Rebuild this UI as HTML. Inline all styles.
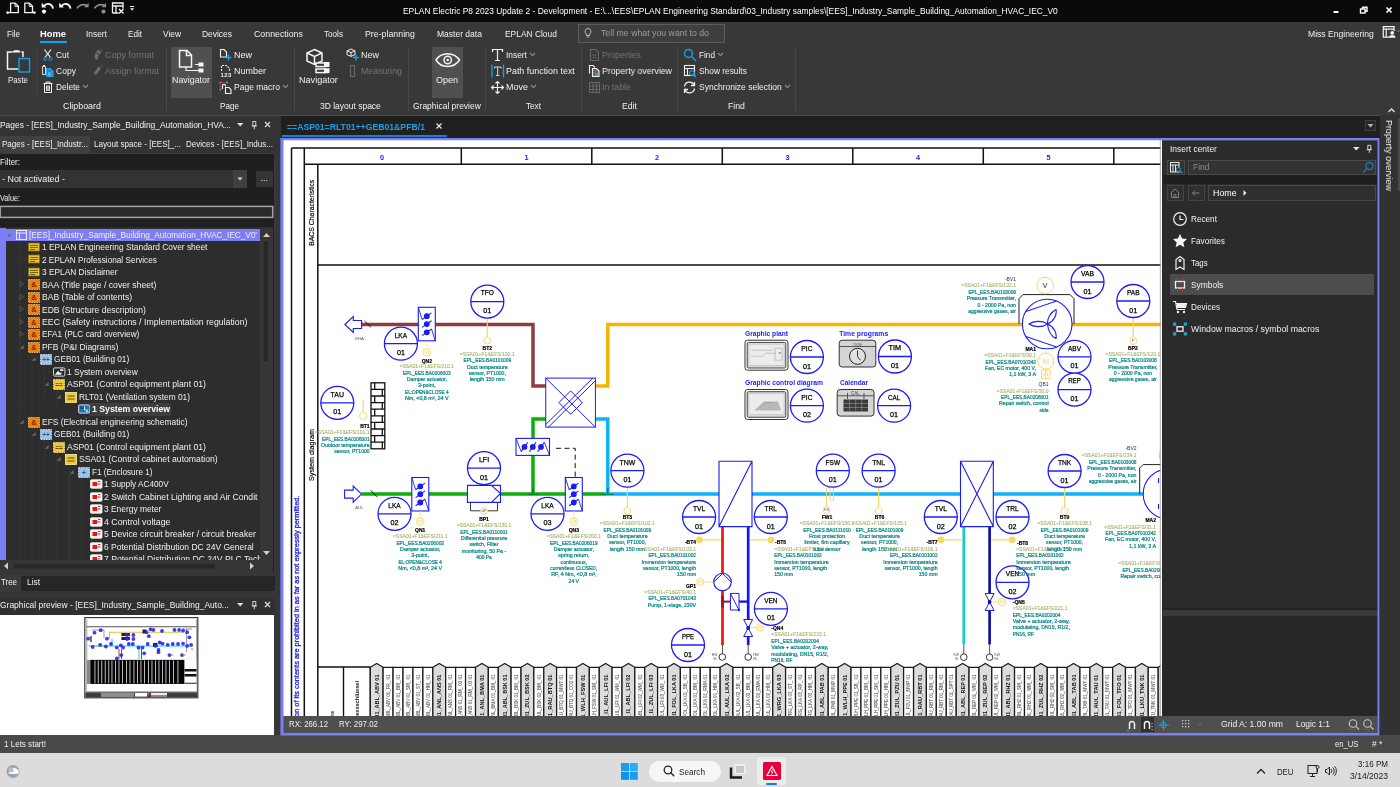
<!DOCTYPE html>
<html lang="en"><head><meta charset="utf-8"><title>EPLAN Electric P8</title><style>html,body{margin:0;padding:0}body{width:1400px;height:787px;position:relative;overflow:hidden;background:#2b2b2b;font-family:"Liberation Sans",sans-serif}
.b{position:absolute;display:block}
svg.b{will-change:transform}
#app{position:absolute;left:0;top:0;width:1400px;height:787px;will-change:transform}
.t{position:absolute;white-space:nowrap;line-height:1;transform-origin:0 0;display:block}
svg text{font-family:"Liberation Sans",sans-serif}</style></head><body>
<div id="app">
<div class="b" style="left:0px;top:0px;width:1400px;height:22px;background:#0a0a0a;"></div>
<svg class="b" style="left:0px;top:0px;" width="140" height="22" viewBox="0 0 140 22">
<g fill="none" stroke="#f4f4f4" stroke-width="1.300" stroke-linejoin="round">
<path d="M10.600 12.500V3.200h4.600l3.100 3v6.300"/><path d="M15 3.400v3h3.200" stroke-width="1"/><path d="M7.500 12.600H18.900" stroke-width="1.200"/>
<path d="M24.800 12.500V3.200h4.600l3.100 3v6.300"/><path d="M29.200 3.400v3h3.200" stroke-width="1"/><path d="M24.200 12.600H34.500" stroke-width="1.200"/>
<path d="M43.800 6.200C46.500 2.600 52 3.200 53 8.600" stroke-width="1.900"/>
<path d="M61.300 6.200C64 2.600 69.500 3.200 70.500 8.600" stroke-width="1.900"/>
</g>
<g fill="#f4f4f4"><circle cx="7.600" cy="12.600" r="1.300"/><circle cx="34.400" cy="12.600" r="1.300"/>
<path d="M41.700 2.800v4.700h4.700z"/><circle cx="44" cy="11.600" r="2.100"/><path d="M59.200 2.800v4.700h4.700z"/></g>
<g fill="none" stroke="#8c8c8c" stroke-width="1.800"><path d="M77 8.300C79 4.500 84 3.600 87.200 5.800"/><path d="M94.500 8.300C96.500 4.500 101.500 3.600 104.700 5.800"/></g>
<g fill="#8c8c8c"><path d="M88.600 2.800v4.500h-4.500z"/><path d="M106.100 2.800v4.500h-4.500z"/><circle cx="103.500" cy="11.600" r="2.100"/></g>
<g fill="none" stroke="#f4f4f4" stroke-width="1.300"><path d="M112.500 13V3h10.500v5.500M112.500 6h10.500M116 6v7M112.500 13h6"/><path d="M119 9l4.500 4.500M123.500 9L119 13.500" stroke-width="1.400"/></g>
<path d="M130 6h4.200v1.100H130zM130 8.300h4.200l-2.100 2.200z" fill="#f4f4f4"/>
</svg>
<span class="t" style="left:403px;top:6.93px;font-size:9.3px;color:#ffffff;transform:scaleX(0.9020);">EPLAN Electric P8 2023 Update 2 - Development - E:\...\EES\EPLAN Engineering Standard\03_Industry samples\[EES]_Industry_Sample_Building_Automation_HVAC_IEC_V0</span>
<svg class="b" style="left:1320px;top:0px;" width="80" height="22" viewBox="0 0 80 22">
<g stroke="#fff" fill="none" stroke-width="1.4"><path d="M13.5 12h5" stroke-width="2"/>
<rect x="40.5" y="9" width="4.5" height="4"/><path d="M42.5 9V7.2h4.5v4h-2"/>
<path d="M66.5 7.5l5 5M71.5 7.5l-5 5" stroke-width="1.6"/></g>
</svg>
<div class="b" style="left:0px;top:22px;width:1400px;height:93px;background:#383838;"></div>
<span class="t" style="left:7px;top:29.04px;font-size:9.4px;color:#f0f0f0;transform:scaleX(0.8582);">File</span>
<span class="t" style="left:40px;top:29.04px;font-size:9.4px;color:#ffffff;font-weight:bold;transform:scaleX(0.9955);">Home</span>
<span class="t" style="left:86px;top:29.04px;font-size:9.4px;color:#f0f0f0;transform:scaleX(0.8933);">Insert</span>
<span class="t" style="left:128px;top:29.04px;font-size:9.4px;color:#f0f0f0;transform:scaleX(0.8643);">Edit</span>
<span class="t" style="left:163px;top:29.04px;font-size:9.4px;color:#f0f0f0;transform:scaleX(0.8908);">View</span>
<span class="t" style="left:202px;top:29.04px;font-size:9.4px;color:#f0f0f0;transform:scaleX(0.8973);">Devices</span>
<span class="t" style="left:254px;top:29.04px;font-size:9.4px;color:#f0f0f0;transform:scaleX(0.9377);">Connections</span>
<span class="t" style="left:324px;top:29.04px;font-size:9.4px;color:#f0f0f0;transform:scaleX(0.8658);">Tools</span>
<span class="t" style="left:365px;top:29.04px;font-size:9.4px;color:#f0f0f0;transform:scaleX(0.9380);">Pre-planning</span>
<span class="t" style="left:437px;top:29.04px;font-size:9.4px;color:#f0f0f0;transform:scaleX(0.9066);">Master data</span>
<span class="t" style="left:505px;top:29.04px;font-size:9.4px;color:#f0f0f0;transform:scaleX(0.8966);">EPLAN Cloud</span>
<div class="b" style="left:40px;top:41px;width:27px;height:2px;background:#00a8f0;"></div>
<div class="b" style="left:578px;top:24px;width:147px;height:19px;background:#3e3e3e;border:1px solid #5c5c5c;box-sizing:border-box;"></div>
<svg class="b" style="left:582px;top:26px;" width="12" height="16" viewBox="0 0 12 16">
<g fill="none" stroke="#bdbdbd" stroke-width="1"><path d="M6 2.5a3 3 0 0 1 1.6 5.5v1.5h-3.2V8A3 3 0 0 1 6 2.5zM4.8 11h2.4"/></g>
</svg>
<span class="t" style="left:601px;top:29.13px;font-size:9.3px;color:#9c9c9c;transform:scaleX(0.9411);">Tell me what you want to do</span>
<span class="t" style="left:1308px;top:29.04px;font-size:9.4px;color:#f0f0f0;transform:scaleX(0.9153);">Miss Engineering</span>
<svg class="b" style="left:1380px;top:24px;" width="20" height="18" viewBox="0 0 20 18">
<g fill="none" stroke="#f0f0f0" stroke-width="1.200"><path d="M9 13.200H3.300V2.600h10.800v4.500M3.300 5.200h10.800M6.200 5.200v8"/></g><circle cx="12.200" cy="8.800" r="1.900" fill="#f4f4f4"/><path d="M8.800 13.800c0-3.800 6.800-3.800 6.800 0z" fill="#f4f4f4"/><path d="M16.800 6.300l1.500 1.500 1.500-1.500" fill="none" stroke="#8a8a8a" stroke-width="1"/>
</svg>
<div class="b" style="left:36px;top:47px;width:1px;height:50px;background:#424242;"></div>
<div class="b" style="left:166px;top:47px;width:1px;height:64px;background:#484848;"></div>
<div class="b" style="left:294px;top:47px;width:1px;height:64px;background:#484848;"></div>
<div class="b" style="left:408px;top:47px;width:1px;height:64px;background:#484848;"></div>
<div class="b" style="left:485px;top:47px;width:1px;height:64px;background:#484848;"></div>
<div class="b" style="left:581px;top:47px;width:1px;height:64px;background:#484848;"></div>
<div class="b" style="left:677px;top:47px;width:1px;height:64px;background:#484848;"></div>
<div class="b" style="left:795px;top:47px;width:1px;height:64px;background:#484848;"></div>
<div class="b" style="left:171px;top:47px;width:41px;height:51px;background:#505050;"></div>
<div class="b" style="left:432px;top:47px;width:31px;height:51px;background:#505050;"></div>
<svg class="b" style="left:4px;top:46px;" width="30" height="28" viewBox="0 0 30 28">
<g fill="none" stroke="#f4f4f4" stroke-width="1.5"><path d="M8.5 6H3.5v17h11M17.5 6h1.5v5"/><path d="M8.5 6.5c0-3.2 8-3.2 8 0z" fill="#f4f4f4" stroke="none"/>
<rect x="15" y="12.5" width="10.5" height="13.5" stroke="#0aa5ee" stroke-width="1.4"/></g>
</svg>
<span class="t" style="left:8px;top:75.04px;font-size:9.4px;color:#f0f0f0;transform:scaleX(0.8320);">Paste</span>
<svg class="b" style="left:42px;top:48px;" width="12" height="14" viewBox="0 0 12 14">
<g fill="none" stroke-width="1"><path d="M2.5 1.5l6 8M9 1.5l-6 8" stroke="#f0f0f0" stroke-width="1.2"/><circle cx="3" cy="10.8" r="1.5" stroke="#1ba1e2"/><circle cx="8.5" cy="10.8" r="1.5" stroke="#1ba1e2"/></g>
</svg>
<span class="t" style="left:56px;top:50.34px;font-size:9.4px;color:#f0f0f0;transform:scaleX(0.8887);">Cut</span>
<svg class="b" style="left:41px;top:64px;" width="14" height="14" viewBox="0 0 14 14">
<g><path d="M1.5 2.5h3v8h-3z" fill="none" stroke="#ddd"/><rect x="2" y="1" width="2" height="2" fill="#ddd"/><path d="M5.5 4.5h4l2.5 2.5v5.5h-6.5z" fill="#1a8fd0" stroke="#2aa9ee" stroke-width="1"/><path d="M7 9h3M7 10.8h3" stroke="#bfe4fa" stroke-width=".7"/></g>
</svg>
<span class="t" style="left:56px;top:66.34px;font-size:9.4px;color:#f0f0f0;transform:scaleX(0.9114);">Copy</span>
<svg class="b" style="left:42px;top:80px;" width="12" height="14" viewBox="0 0 12 14">
<g fill="none" stroke="#f0f0f0" stroke-width="1"><path d="M1.5 3.5h9M4 3.5V2h4v1.5M2.5 3.5v9h7v-9M4.6 5.5v5.5M6 5.5v5.5M7.4 5.5v5.5"/></g>
</svg>
<span class="t" style="left:56px;top:82.34px;font-size:9.4px;color:#f0f0f0;transform:scaleX(0.8832);">Delete</span>
<svg class="b" style="left:82px;top:84px;" width="8" height="6" viewBox="0 0 8 6">
<path d="M1 1l2.5 2.6L6 1" fill="none" stroke="#8c8c8c" stroke-width="1.1"/>
</svg>
<svg class="b" style="left:92px;top:48px;" width="12" height="14" viewBox="0 0 12 14">
<g fill="#6c6c6c"><path d="M6 1.5l3.5 2.5-2 2.5L4 4zM3.5 4.5l3.5 2.8-1.5 4.2c-1 .8-3.5-1-3-2.5z"/><path d="M8 2l2-1 .5 1.2z"/></g>
</svg>
<span class="t" style="left:105px;top:50.34px;font-size:9.4px;color:#747474;transform:scaleX(0.9571);">Copy format</span>
<svg class="b" style="left:92px;top:64px;" width="12" height="14" viewBox="0 0 12 14">
<g fill="#6c6c6c"><path d="M6.5 2.5l2.5 2-4.5 6c-1 .8-3-.6-2.4-1.8z"/><path d="M8 2l2-1 .3 1.5z"/></g>
</svg>
<span class="t" style="left:105px;top:66.34px;font-size:9.4px;color:#747474;transform:scaleX(0.9397);">Assign format</span>
<span class="t" style="left:63px;top:101.04px;font-size:9.4px;color:#f0f0f0;transform:scaleX(0.9444);">Clipboard</span>
<svg class="b" style="left:176px;top:47px;" width="30" height="28" viewBox="0 0 30 28">
<g fill="none" stroke="#f4f4f4" stroke-width="1.5"><path d="M3.5 20V3.5h7.5l4.5 4.5v12z"/><path d="M10.5 3.5v5h5"/><path d="M19 17.5h6M10 20v3.5h15" stroke-width="1.2"/></g><g fill="#f4f4f4"><rect x="22.5" y="15.5" width="5" height="4"/><rect x="22.5" y="21.5" width="5" height="4"/></g>
</svg>
<span class="t" style="left:172px;top:75.04px;font-size:9.4px;color:#f0f0f0;transform:scaleX(0.9445);">Navigator</span>
<svg class="b" style="left:218px;top:47px;" width="16" height="14" viewBox="0 0 16 14">
<g fill="none" stroke-width="1.1"><path d="M2.5 10V2.5h3.5l2.5 2.5v5z" stroke="#f0f0f0"/><path d="M10.5 7.5v6M7.5 10.5h6" stroke="#1ba1e2" stroke-width="1.3"/></g>
</svg>
<span class="t" style="left:234px;top:50.34px;font-size:9.4px;color:#f0f0f0;transform:scaleX(0.9572);">New</span>
<svg class="b" style="left:218px;top:63px;" width="16" height="16" viewBox="0 0 16 16">
<g fill="none" stroke="#f0f0f0" stroke-width="1.1"><path d="M3.5 8V2.5h5l3 3V8" stroke-dasharray="2 1"/></g>
</svg>
<span class="t" style="left:220.5px;top:71.92px;font-size:6px;color:#f0f0f0;font-weight:bold;">1</span>
<span class="t" style="left:224.3px;top:71.92px;font-size:6px;color:#f0f0f0;font-weight:bold;">2</span>
<span class="t" style="left:228px;top:71.92px;font-size:6px;color:#f0f0f0;font-weight:bold;">3</span>
<span class="t" style="left:234px;top:66.34px;font-size:9.4px;color:#f0f0f0;transform:scaleX(0.9571);">Number</span>
<svg class="b" style="left:218px;top:80px;" width="16" height="16" viewBox="0 0 16 16">
<g fill="none" stroke="#f0f0f0" stroke-width="1.1"><path d="M7.5 13.5V7.5h3.5l2 2v4z"/><path d="M4.5 9V5.5c0-1.5 3-1.5 3 0v1"/></g><g fill="#1ba1e2"><rect x="1.5" y="1.5" width="2" height="2"/><rect x="8" y="1.5" width="2" height="2"/><rect x="1.5" y="8.5" width="2" height="2"/></g><path d="M4 2.5h3.5M2.5 4v4" stroke="#f03030" stroke-width="1" stroke-dasharray="1.5 1"/>
</svg>
<span class="t" style="left:234px;top:82.34px;font-size:9.4px;color:#f0f0f0;transform:scaleX(0.9076);">Page macro</span>
<svg class="b" style="left:282px;top:84px;" width="8" height="6" viewBox="0 0 8 6">
<path d="M1 1l2.5 2.6L6 1" fill="none" stroke="#8c8c8c" stroke-width="1.1"/>
</svg>
<span class="t" style="left:220px;top:101.04px;font-size:9.4px;color:#f0f0f0;transform:scaleX(0.8654);">Page</span>
<svg class="b" style="left:302px;top:46px;" width="32" height="30" viewBox="0 0 32 30">
<g fill="none" stroke="#f4f4f4" stroke-width="1.5"><path d="M12.5 3.5l7.5 3.5v8l-7.5 3.5L5 15V7z"/><path d="M5 7l7.5 3.5L20 7M12.5 10.5v8"/><rect x="14" y="17" width="9" height="3.6" fill="#383838"/><rect x="14" y="23" width="9" height="3.6"/></g><g fill="#f4f4f4"><rect x="22" y="16" width="5.5" height="5"/><rect x="22" y="22.2" width="5.5" height="5"/></g>
</svg>
<span class="t" style="left:299px;top:75.04px;font-size:9.4px;color:#f0f0f0;transform:scaleX(0.9694);">Navigator</span>
<svg class="b" style="left:345px;top:47px;" width="16" height="14" viewBox="0 0 16 14">
<g fill="none" stroke-width="1"><path d="M6 2l4 1.8v3.8L6 9.4 2 7.6V3.8zM2 3.8l4 1.8 4-1.8M6 5.6v3.8" stroke="#f0f0f0"/><path d="M11 7.5v6M8 10.5h6" stroke="#1ba1e2" stroke-width="1.3"/></g>
</svg>
<span class="t" style="left:361px;top:50.34px;font-size:9.4px;color:#f0f0f0;transform:scaleX(0.9572);">New</span>
<svg class="b" style="left:345px;top:63px;" width="16" height="16" viewBox="0 0 16 16">
<rect x="5.5" y="2.5" width="4" height="11" fill="none" stroke="#686868" stroke-width="1.2"/>
</svg>
<span class="t" style="left:361px;top:66.34px;font-size:9.4px;color:#747474;transform:scaleX(0.9342);">Measuring</span>
<span class="t" style="left:320px;top:101.04px;font-size:9.4px;color:#f0f0f0;transform:scaleX(0.9049);">3D layout space</span>
<svg class="b" style="left:434px;top:50px;" width="28" height="20" viewBox="0 0 28 20">
<g fill="none" stroke="#f4f4f4" stroke-width="1.5"><path d="M2 10c5-8.5 18-8.5 23.5 0-5.500 8.500-18.500 8.500-23.500 0z"/><circle cx="13.700" cy="10" r="3.700"/></g><circle cx="13.700" cy="10" r="1.300" fill="#f4f4f4"/>
</svg>
<span class="t" style="left:436px;top:75.04px;font-size:9.4px;color:#f0f0f0;transform:scaleX(0.9567);">Open</span>
<span class="t" style="left:413px;top:101.04px;font-size:9.4px;color:#f0f0f0;transform:scaleX(0.9038);">Graphical preview</span>
<svg class="b" style="left:490px;top:47px;" width="16" height="16" viewBox="0 0 16 16">
<path d="M2.500 5V2.500h10V5M7.500 2.500V13.500M5 13.500h5" fill="none" stroke="#f0f0f0" stroke-width="1.200"/>
</svg>
<span class="t" style="left:506px;top:50.34px;font-size:9.4px;color:#f0f0f0;transform:scaleX(0.8933);">Insert</span>
<svg class="b" style="left:529px;top:52px;" width="8" height="6" viewBox="0 0 8 6">
<path d="M1 1l2.5 2.6L6 1" fill="none" stroke="#8c8c8c" stroke-width="1.1"/>
</svg>
<svg class="b" style="left:490px;top:63px;" width="16" height="16" viewBox="0 0 16 16">
<path d="M2 1.500v13M13.500 1.500v13" stroke="#1ba1e2" stroke-width="1.300"/><path d="M4.500 5.500V4h6.500v1.500M7.700 4v8.500M6 12.500h3.500" fill="none" stroke="#d8d8d8" stroke-width="1"/>
</svg>
<span class="t" style="left:506px;top:66.34px;font-size:9.4px;color:#f0f0f0;transform:scaleX(0.9500);">Path function text</span>
<svg class="b" style="left:490px;top:80px;" width="16" height="16" viewBox="0 0 16 16">
<g fill="none" stroke="#f0f0f0" stroke-width="1.100"><path d="M7.500 1.500v12M1.500 7.500h12M5.500 3.500l2-2 2 2M5.500 11.500l2 2 2-2M3.500 5.500l-2 2 2 2M11.500 5.500l2 2-2 2"/></g>
</svg>
<span class="t" style="left:506px;top:82.34px;font-size:9.4px;color:#f0f0f0;transform:scaleX(0.9571);">Move</span>
<svg class="b" style="left:530px;top:84px;" width="8" height="6" viewBox="0 0 8 6">
<path d="M1 1l2.5 2.6L6 1" fill="none" stroke="#8c8c8c" stroke-width="1.1"/>
</svg>
<span class="t" style="left:526px;top:101.04px;font-size:9.4px;color:#f0f0f0;transform:scaleX(0.8701);">Text</span>
<svg class="b" style="left:587px;top:47px;" width="16" height="16" viewBox="0 0 16 16">
<g fill="none" stroke="#686868" stroke-width="1.100"><path d="M3.500 13.500V2.500h5l3 3v8z"/><path d="M5.500 8h4M5.500 10.500h4"/></g>
</svg>
<span class="t" style="left:602px;top:50.34px;font-size:9.4px;color:#747474;transform:scaleX(0.9103);">Properties</span>
<svg class="b" style="left:587px;top:63px;" width="16" height="16" viewBox="0 0 16 16">
<g fill="none" stroke="#f0f0f0" stroke-width="1.100"><path d="M2.500 10.500V2.500h3.500l2 2"/><path d="M5.500 13.500V5.500h4l2.500 2.500v5.500z" fill="#f0f0f0" fill-opacity=".25"/></g><rect x="8.500" y="10" width="3" height="3" fill="#30c060"/>
</svg>
<span class="t" style="left:602px;top:66.34px;font-size:9.4px;color:#f0f0f0;transform:scaleX(0.9305);">Property overview</span>
<svg class="b" style="left:587px;top:80px;" width="16" height="16" viewBox="0 0 16 16">
<g fill="none" stroke="#686868" stroke-width="1"><rect x="2.500" y="2.500" width="10" height="10"/><path d="M2.500 6h10M2.500 9.500h10M6 2.500v10M9.500 2.500v10"/></g>
</svg>
<span class="t" style="left:602px;top:82.34px;font-size:9.4px;color:#747474;transform:scaleX(0.9405);">In table</span>
<span class="t" style="left:622px;top:101.04px;font-size:9.4px;color:#f0f0f0;transform:scaleX(0.9260);">Edit</span>
<svg class="b" style="left:682px;top:47px;" width="16" height="16" viewBox="0 0 16 16">
<g fill="none" stroke="#1ba1e2" stroke-width="1.400"><circle cx="6.500" cy="6.500" r="4"/><path d="M9.500 9.500l4.500 4.500"/></g>
</svg>
<span class="t" style="left:699px;top:50.34px;font-size:9.4px;color:#f0f0f0;transform:scaleX(0.8750);">Find</span>
<svg class="b" style="left:717px;top:52px;" width="8" height="6" viewBox="0 0 8 6">
<path d="M1 1l2.5 2.6L6 1" fill="none" stroke="#8c8c8c" stroke-width="1.1"/>
</svg>
<svg class="b" style="left:682px;top:63px;" width="16" height="16" viewBox="0 0 16 16">
<g fill="none" stroke="#f0f0f0" stroke-width="1.100"><rect x="2.500" y="2.500" width="10" height="10"/><path d="M2.500 5.500h10M5.500 5.500v7"/></g><circle cx="10" cy="10" r="2.300" fill="#383838" stroke="#1ba1e2" stroke-width="1.100"/><path d="M11.700 11.700l2.300 2.300" stroke="#1ba1e2" stroke-width="1.300"/>
</svg>
<span class="t" style="left:699px;top:66.34px;font-size:9.4px;color:#f0f0f0;transform:scaleX(0.8920);">Show results</span>
<svg class="b" style="left:682px;top:80px;" width="16" height="16" viewBox="0 0 16 16">
<g fill="none" stroke="#f0f0f0" stroke-width="1.300"><path d="M2.500 6.500a5 5 0 0 1 9.500-1.500M12.500 8.500a5 5 0 0 1-9.500 1.500"/><path d="M12.500 2v3.500h-3.500M2.500 13v-3.500h3.500"/></g>
</svg>
<span class="t" style="left:699px;top:82.34px;font-size:9.4px;color:#f0f0f0;transform:scaleX(0.9077);">Synchronize selection</span>
<svg class="b" style="left:784px;top:84px;" width="8" height="6" viewBox="0 0 8 6">
<path d="M1 1l2.5 2.6L6 1" fill="none" stroke="#8c8c8c" stroke-width="1.1"/>
</svg>
<span class="t" style="left:728px;top:101.04px;font-size:9.4px;color:#f0f0f0;transform:scaleX(0.9296);">Find</span>
<svg class="b" style="left:1386px;top:105px;" width="12" height="10" viewBox="0 0 12 10">
<path d="M2.500 7l3-3 3 3" fill="none" stroke="#e0e0e0" stroke-width="1.300"/>
</svg>
<div class="b" style="left:0px;top:115px;width:280.5px;height:620px;background:#363636;"></div>
<div class="b" style="left:0px;top:115px;width:280.5px;height:21px;background:#333333;"></div>
<span class="t" style="left:0px;top:121.13px;font-size:9.3px;color:#f0f0f0;transform:scaleX(0.9051);">Pages - [EES]_Industry_Sample_Building_Automation_HVA...</span>
<svg class="b" style="left:234px;top:118px;" width="40" height="14" viewBox="0 0 40 14">
<path d="M3 5h6.500l-3.250 3.500z" fill="#dcdcdc"/><g fill="none" stroke="#d8d8d8" stroke-width="1"><path d="M18.800 3.500h3v4.300h-3zM17.700 8h5.200M20.300 8v3.300"/><path d="M31 4l5 5M36 4l-5 5" stroke-width="1.300"/></g>
</svg>
<div class="b" style="left:280.5px;top:115.5px;width:1120px;height:23px;background:#202020;"></div>
<div class="b" style="left:0px;top:114.8px;width:1400px;height:1px;background:#4a4a4a;"></div>
<div class="b" style="left:0px;top:136px;width:280px;height:17px;background:#333333;"></div>
<div class="b" style="left:0px;top:136px;width:90px;height:17px;background:#404040;"></div>
<span class="t" style="left:2px;top:139.63px;font-size:9.3px;color:#f0f0f0;transform:scaleX(0.8665);">Pages - [EES]_Industr...</span>
<span class="t" style="left:94px;top:139.63px;font-size:9.3px;color:#f0f0f0;transform:scaleX(0.8675);">Layout space - [EES]_...</span>
<span class="t" style="left:186px;top:139.63px;font-size:9.3px;color:#f0f0f0;transform:scaleX(0.8631);">Devices - [EES]_Indus...</span>
<div class="b" style="left:0px;top:153px;width:275px;height:420px;background:#1f1f1f;border-right:1px solid #3c3c3c;border-top:1px solid #3c3c3c;box-sizing:border-box;"></div>
<span class="t" style="left:0px;top:157.93px;font-size:9.3px;color:#f0f0f0;transform:scaleX(0.8602);">Filter:</span>
<div class="b" style="left:0px;top:170px;width:247px;height:18px;background:#333333;"></div>
<div class="b" style="left:233px;top:170px;width:14px;height:18px;background:#404040;"></div>
<span class="t" style="left:2px;top:175.33px;font-size:9.3px;color:#f0f0f0;transform:scaleX(0.9598);">- Not activated -</span>
<svg class="b" style="left:236px;top:176px;" width="8" height="6" viewBox="0 0 8 6">
<path d="M1.500 1.500h5l-2.500 3z" fill="#d8d8d8"/>
</svg>
<div class="b" style="left:256px;top:171px;width:17px;height:16px;background:#353535;"></div>
<span class="t" style="left:260.5px;top:173.88px;font-size:9px;color:#f0f0f0;">...</span>
<span class="t" style="left:0px;top:193.83px;font-size:9.3px;color:#f0f0f0;transform:scaleX(0.7788);">Value:</span>
<svg class="b" style="left:0px;top:205px;" width="275" height="14" viewBox="0 0 275 14">
<rect x=".2" y="1.400" width="272.500" height="11" fill="#2a2a2a" stroke="#a4a4a4" stroke-width="1.500"/>
</svg>
<div class="b" style="left:0px;top:227px;width:273px;height:333px;background:#2d2d2d;"></div>
<div class="b" style="left:0px;top:228px;width:5.8px;height:332px;background:#7d7df5;"></div>
<div class="b" style="left:5px;top:228.5px;width:255px;height:12.5px;background:#7d7df5;"></div>
<div class="b" style="left:0;top:227px;width:260px;height:333px;overflow:hidden">
<svg class="b" style="left:0px;top:0px;" width="260" height="333" viewBox="0 0 260 333">
<g stroke="#3e3e3e" stroke-width="1" stroke-dasharray="1 1" fill="none"><path d="M19.500 14V333M32 126V190M44.500 138V176M57 151V182M32 200V333M44.500 213V333M57 226V333M69.500 238V333M82 250V333M19.500 20h7M19.500 32.500h7M19.500 45h7M44.500 145h7"/></g>
</svg>
<svg class="b" style="left:15px;top:1.5px;" width="13" height="12" viewBox="0 0 13 12">
<g fill="none" stroke="#e8e8ff" stroke-width="1"><rect x="1.500" y="1.500" width="10" height="9"/><path d="M1.500 4h10M4.500 4v6.500"/></g>
</svg>
<span class="t" style="left:29px;top:3.63px;font-size:9.3px;color:#f0f0f0;transform:scaleX(0.8819);">[EES]_Industry_Sample_Building_Automation_HVAC_IEC_V0'</span>
<svg class="b" style="left:6px;top:4.5px;" width="6" height="6" viewBox="0 0 6 6">
<path d="M4.600 1v3.800H.8z" fill="#6e6e6e"/>
</svg>
<svg class="b" style="left:27.5px;top:14.97999999999999px;" width="12" height="10" viewBox="0 0 12 10">
<rect x=".5" y="1" width="11" height="8" fill="#e8c030" stroke="#8a6a10" stroke-width=".8"/><path d="M2 3.500h8M2 5.500h8M2 7.500h5" stroke="#5a4a10" stroke-width=".8"/>
</svg>
<span class="t" style="left:41.5px;top:16.11px;font-size:9.3px;color:#f0f0f0;transform:scaleX(0.9017);">1 EPLAN Engineering Standard Cover sheet</span>
<svg class="b" style="left:27.5px;top:27.45999999999998px;" width="12" height="10" viewBox="0 0 12 10">
<rect x=".5" y="1" width="11" height="8" fill="#e8c030" stroke="#8a6a10" stroke-width=".8"/><path d="M2 3.500h8M2 5.500h8M2 7.500h5" stroke="#5a4a10" stroke-width=".8"/>
</svg>
<span class="t" style="left:41.5px;top:28.59px;font-size:9.3px;color:#f0f0f0;transform:scaleX(0.8821);">2 EPLAN Professional Services</span>
<svg class="b" style="left:27.5px;top:39.94px;" width="12" height="10" viewBox="0 0 12 10">
<rect x=".5" y="1" width="11" height="8" fill="#e8c030" stroke="#8a6a10" stroke-width=".8"/><path d="M2 3.500h8M2 5.500h8M2 7.500h5" stroke="#5a4a10" stroke-width=".8"/>
</svg>
<span class="t" style="left:41.5px;top:41.07px;font-size:9.3px;color:#f0f0f0;transform:scaleX(0.8962);">3 EPLAN Disclaimer</span>
<svg class="b" style="left:27.5px;top:52.420000000000016px;" width="12" height="11" viewBox="0 0 12 11">
<rect x=".5" y=".5" width="11" height="10" fill="#f08010" stroke="#fbd09a" stroke-width=".8" stroke-dasharray="1.500 1"/><text x="6" y="8.200" font-size="7.500" font-weight="bold" text-anchor="middle" fill="#7a2a00">&amp;</text>
</svg>
<span class="t" style="left:41.5px;top:53.55px;font-size:9.3px;color:#f0f0f0;transform:scaleX(0.9278);">BAA (Title page / cover sheet)</span>
<svg class="b" style="left:18.5px;top:54.420000000000016px;" width="6" height="6" viewBox="0 0 6 6">
<path d="M1 .5l3.500 2.500L1 5.500z" fill="none" stroke="#5c5c5c" stroke-width=".8"/>
</svg>
<svg class="b" style="left:27.5px;top:64.89999999999998px;" width="12" height="11" viewBox="0 0 12 11">
<rect x=".5" y=".5" width="11" height="10" fill="#f08010" stroke="#fbd09a" stroke-width=".8" stroke-dasharray="1.500 1"/><text x="6" y="8.200" font-size="7.500" font-weight="bold" text-anchor="middle" fill="#7a2a00">&amp;</text>
</svg>
<span class="t" style="left:41.5px;top:66.03px;font-size:9.3px;color:#f0f0f0;transform:scaleX(0.9222);">BAB (Table of contents)</span>
<svg class="b" style="left:18.5px;top:66.89999999999998px;" width="6" height="6" viewBox="0 0 6 6">
<path d="M1 .5l3.500 2.500L1 5.500z" fill="none" stroke="#5c5c5c" stroke-width=".8"/>
</svg>
<svg class="b" style="left:27.5px;top:77.38px;" width="12" height="11" viewBox="0 0 12 11">
<rect x=".5" y=".5" width="11" height="10" fill="#f08010" stroke="#fbd09a" stroke-width=".8" stroke-dasharray="1.500 1"/><text x="6" y="8.200" font-size="7.500" font-weight="bold" text-anchor="middle" fill="#7a2a00">&amp;</text>
</svg>
<span class="t" style="left:41.5px;top:78.51px;font-size:9.3px;color:#f0f0f0;transform:scaleX(0.9170);">EDB (Structure description)</span>
<svg class="b" style="left:18.5px;top:79.38px;" width="6" height="6" viewBox="0 0 6 6">
<path d="M1 .5l3.500 2.500L1 5.500z" fill="none" stroke="#5c5c5c" stroke-width=".8"/>
</svg>
<svg class="b" style="left:27.5px;top:89.86000000000001px;" width="12" height="11" viewBox="0 0 12 11">
<rect x=".5" y=".5" width="11" height="10" fill="#f08010" stroke="#fbd09a" stroke-width=".8" stroke-dasharray="1.500 1"/><text x="6" y="8.200" font-size="7.500" font-weight="bold" text-anchor="middle" fill="#7a2a00">&amp;</text>
</svg>
<span class="t" style="left:41.5px;top:90.99px;font-size:9.3px;color:#f0f0f0;transform:scaleX(0.9398);">EEC (Safety instructions / Implementation regulation)</span>
<svg class="b" style="left:18.5px;top:91.86000000000001px;" width="6" height="6" viewBox="0 0 6 6">
<path d="M1 .5l3.500 2.500L1 5.500z" fill="none" stroke="#5c5c5c" stroke-width=".8"/>
</svg>
<svg class="b" style="left:27.5px;top:102.34000000000003px;" width="12" height="11" viewBox="0 0 12 11">
<rect x=".5" y=".5" width="11" height="10" fill="#f08010" stroke="#fbd09a" stroke-width=".8" stroke-dasharray="1.500 1"/><text x="6" y="8.200" font-size="7.500" font-weight="bold" text-anchor="middle" fill="#7a2a00">&amp;</text>
</svg>
<span class="t" style="left:41.5px;top:103.47px;font-size:9.3px;color:#f0f0f0;transform:scaleX(0.8889);">EFA1 (PLC card overview)</span>
<svg class="b" style="left:18.5px;top:104.34000000000003px;" width="6" height="6" viewBox="0 0 6 6">
<path d="M1 .5l3.500 2.500L1 5.500z" fill="none" stroke="#5c5c5c" stroke-width=".8"/>
</svg>
<svg class="b" style="left:27.5px;top:114.82px;" width="12" height="11" viewBox="0 0 12 11">
<rect x=".5" y=".5" width="11" height="10" fill="#f08010" stroke="#fbd09a" stroke-width=".8" stroke-dasharray="1.500 1"/><text x="6" y="8.200" font-size="7.500" font-weight="bold" text-anchor="middle" fill="#7a2a00">&amp;</text>
</svg>
<span class="t" style="left:41.5px;top:115.95px;font-size:9.3px;color:#f0f0f0;transform:scaleX(0.9058);">PFB (P&amp;I Diagrams)</span>
<svg class="b" style="left:18.5px;top:116.82px;" width="6" height="6" viewBox="0 0 6 6">
<path d="M4.600 1v3.800H.8z" fill="#6e6e6e"/>
</svg>
<svg class="b" style="left:40px;top:127.30000000000001px;" width="12" height="11" viewBox="0 0 12 11">
<rect x=".5" y=".5" width="11" height="10" fill="#9cc4e8" stroke="#e4f0fa" stroke-width=".8" stroke-dasharray="1.500 1"/><text x="6" y="8" font-size="6.500" font-weight="bold" text-anchor="middle" fill="#2a5a90">++</text>
</svg>
<span class="t" style="left:54px;top:128.43px;font-size:9.3px;color:#f0f0f0;transform:scaleX(0.8870);">GEB01 (Building 01)</span>
<svg class="b" style="left:31px;top:129.3px;" width="6" height="6" viewBox="0 0 6 6">
<path d="M4.600 1v3.800H.8z" fill="#6e6e6e"/>
</svg>
<svg class="b" style="left:52.5px;top:139.77999999999997px;" width="13" height="10" viewBox="0 0 13 10">
<rect x=".6" y=".9" width="11.300" height="8.200" rx="1.200" fill="#262626" stroke="#dcdcdc" stroke-width="1"/><path d="M1.800 7.800l3.200-4 2.200 2.200 1.200-1v2.800z" fill="#f0f0f0"/><rect x="7.200" y="2.200" width="3.200" height="1.800" fill="#e8e8e8"/>
</svg>
<span class="t" style="left:66.5px;top:140.91px;font-size:9.3px;color:#f0f0f0;transform:scaleX(0.9085);">1 System overview</span>
<svg class="b" style="left:52.5px;top:152.26px;" width="12" height="11" viewBox="0 0 12 11">
<rect x=".5" y=".5" width="11" height="10" fill="#f0c838" stroke="#fff0b0" stroke-width=".8" stroke-dasharray="1.500 1"/><text x="6" y="8" font-size="6.500" font-weight="bold" text-anchor="middle" fill="#6a5000">==</text>
</svg>
<span class="t" style="left:66.5px;top:153.39px;font-size:9.3px;color:#f0f0f0;transform:scaleX(0.9303);">ASP01 (Control equipment plant 01)</span>
<svg class="b" style="left:43.5px;top:154.26px;" width="6" height="6" viewBox="0 0 6 6">
<path d="M4.600 1v3.800H.8z" fill="#6e6e6e"/>
</svg>
<svg class="b" style="left:65px;top:164.74px;" width="12" height="11" viewBox="0 0 12 11">
<rect x=".5" y=".5" width="11" height="10" fill="#f0c838" stroke="#fff0b0" stroke-width=".8"/><path d="M2.500 4h7M2.500 7h7" stroke="#6a5000" stroke-width="1.200"/>
</svg>
<span class="t" style="left:79px;top:165.87px;font-size:9.3px;color:#f0f0f0;transform:scaleX(0.8960);">RLT01 (Ventilation system 01)</span>
<svg class="b" style="left:56px;top:166.74px;" width="6" height="6" viewBox="0 0 6 6">
<path d="M4.600 1v3.800H.8z" fill="#6e6e6e"/>
</svg>
<svg class="b" style="left:77.5px;top:177.22000000000003px;" width="13" height="10" viewBox="0 0 13 10">
<rect x=".6" y=".9" width="11.300" height="8.200" rx="1.200" fill="#1a78b4" stroke="#dcdcdc" stroke-width="1"/><path d="M6.500 2.500v3.500h3.500M8 7.500h2.500" stroke="#e8f0f8" stroke-width=".9" fill="none"/><rect x="2.200" y="2.500" width="3" height="2.500" fill="#0c4a78"/>
</svg>
<div class="b" style="left:90.0px;top:176.22000000000003px;width:81.1px;height:12.5px;background:#3e3e3e;"></div>
<span class="t" style="left:91.5px;top:178.35px;font-size:9.3px;color:#ffffff;font-weight:bold;transform:scaleX(0.9383);">1 System overview</span>
<svg class="b" style="left:27.5px;top:189.70000000000005px;" width="12" height="11" viewBox="0 0 12 11">
<rect x=".5" y=".5" width="11" height="10" fill="#f08010" stroke="#fbd09a" stroke-width=".8" stroke-dasharray="1.500 1"/><text x="6" y="8.200" font-size="7.500" font-weight="bold" text-anchor="middle" fill="#7a2a00">&amp;</text>
</svg>
<span class="t" style="left:41.5px;top:190.83px;font-size:9.3px;color:#f0f0f0;transform:scaleX(0.9080);">EFS (Electrical engineering schematic)</span>
<svg class="b" style="left:18.5px;top:191.70000000000005px;" width="6" height="6" viewBox="0 0 6 6">
<path d="M4.600 1v3.800H.8z" fill="#6e6e6e"/>
</svg>
<svg class="b" style="left:40px;top:202.18px;" width="12" height="11" viewBox="0 0 12 11">
<rect x=".5" y=".5" width="11" height="10" fill="#9cc4e8" stroke="#e4f0fa" stroke-width=".8" stroke-dasharray="1.500 1"/><text x="6" y="8" font-size="6.500" font-weight="bold" text-anchor="middle" fill="#2a5a90">++</text>
</svg>
<span class="t" style="left:54px;top:203.31px;font-size:9.3px;color:#f0f0f0;transform:scaleX(0.8870);">GEB01 (Building 01)</span>
<svg class="b" style="left:31px;top:204.18px;" width="6" height="6" viewBox="0 0 6 6">
<path d="M4.600 1v3.800H.8z" fill="#6e6e6e"/>
</svg>
<svg class="b" style="left:52.5px;top:214.65999999999997px;" width="12" height="11" viewBox="0 0 12 11">
<rect x=".5" y=".5" width="11" height="10" fill="#f0c838" stroke="#fff0b0" stroke-width=".8" stroke-dasharray="1.500 1"/><text x="6" y="8" font-size="6.500" font-weight="bold" text-anchor="middle" fill="#6a5000">==</text>
</svg>
<span class="t" style="left:66.5px;top:215.79px;font-size:9.3px;color:#f0f0f0;transform:scaleX(0.9303);">ASP01 (Control equipment plant 01)</span>
<svg class="b" style="left:43.5px;top:216.65999999999997px;" width="6" height="6" viewBox="0 0 6 6">
<path d="M4.600 1v3.800H.8z" fill="#6e6e6e"/>
</svg>
<svg class="b" style="left:65px;top:227.14px;" width="12" height="11" viewBox="0 0 12 11">
<rect x=".5" y=".5" width="11" height="10" fill="#f0c838" stroke="#fff0b0" stroke-width=".8"/><path d="M2.500 4h7M2.500 7h7" stroke="#6a5000" stroke-width="1.200"/>
</svg>
<span class="t" style="left:79px;top:228.27px;font-size:9.3px;color:#f0f0f0;transform:scaleX(0.9323);">SSA01 (Control cabinet automation)</span>
<svg class="b" style="left:56px;top:229.14px;" width="6" height="6" viewBox="0 0 6 6">
<path d="M4.600 1v3.800H.8z" fill="#6e6e6e"/>
</svg>
<svg class="b" style="left:77.5px;top:239.62px;" width="12" height="11" viewBox="0 0 12 11">
<rect x=".5" y=".5" width="11" height="10" fill="#9cc4e8" stroke="#e4f0fa" stroke-width=".8" stroke-dasharray="1.500 1"/><text x="6" y="8.300" font-size="7.500" font-weight="bold" text-anchor="middle" fill="#2a5a90">+</text>
</svg>
<span class="t" style="left:91.5px;top:240.75px;font-size:9.3px;color:#f0f0f0;transform:scaleX(0.8801);">F1 (Enclosure 1)</span>
<svg class="b" style="left:68.5px;top:241.62px;" width="6" height="6" viewBox="0 0 6 6">
<path d="M4.600 1v3.800H.8z" fill="#6e6e6e"/>
</svg>
<svg class="b" style="left:90px;top:252.10000000000002px;" width="13" height="10" viewBox="0 0 13 10">
<rect x=".5" y=".8" width="11.500" height="8.400" rx="1" fill="#f4f0f0" stroke="#fff" stroke-width=".8"/><rect x="2.500" y="3" width="4.500" height="4" fill="#e01818"/><path d="M7 5h3.500M8 2.500h2.500" stroke="#c02020" stroke-width=".9"/>
</svg>
<span class="t" style="left:104px;top:253.23px;font-size:9.3px;color:#f0f0f0;transform:scaleX(0.8875);">1 Supply AC400V</span>
<svg class="b" style="left:90px;top:264.58px;" width="13" height="10" viewBox="0 0 13 10">
<rect x=".5" y=".8" width="11.500" height="8.400" rx="1" fill="#f4f0f0" stroke="#fff" stroke-width=".8"/><rect x="2.500" y="3" width="4.500" height="4" fill="#e01818"/><path d="M7 5h3.500M8 2.500h2.500" stroke="#c02020" stroke-width=".9"/>
</svg>
<span class="t" style="left:104px;top:265.71px;font-size:9.3px;color:#f0f0f0;transform:scaleX(0.9250);">2 Switch Cabinet Lighting and Air Condit</span>
<svg class="b" style="left:90px;top:277.06px;" width="13" height="10" viewBox="0 0 13 10">
<rect x=".5" y=".8" width="11.500" height="8.400" rx="1" fill="#f4f0f0" stroke="#fff" stroke-width=".8"/><rect x="2.500" y="3" width="4.500" height="4" fill="#e01818"/><path d="M7 5h3.500M8 2.500h2.500" stroke="#c02020" stroke-width=".9"/>
</svg>
<span class="t" style="left:104px;top:278.19px;font-size:9.3px;color:#f0f0f0;transform:scaleX(0.9028);">3 Energy meter</span>
<svg class="b" style="left:90px;top:289.53999999999996px;" width="13" height="10" viewBox="0 0 13 10">
<rect x=".5" y=".8" width="11.500" height="8.400" rx="1" fill="#f4f0f0" stroke="#fff" stroke-width=".8"/><rect x="2.500" y="3" width="4.500" height="4" fill="#e01818"/><path d="M7 5h3.500M8 2.500h2.500" stroke="#c02020" stroke-width=".9"/>
</svg>
<span class="t" style="left:104px;top:290.67px;font-size:9.3px;color:#f0f0f0;transform:scaleX(0.9458);">4 Control voltage</span>
<svg class="b" style="left:90px;top:302.02px;" width="13" height="10" viewBox="0 0 13 10">
<rect x=".5" y=".8" width="11.500" height="8.400" rx="1" fill="#f4f0f0" stroke="#fff" stroke-width=".8"/><rect x="2.500" y="3" width="4.500" height="4" fill="#e01818"/><path d="M7 5h3.500M8 2.500h2.500" stroke="#c02020" stroke-width=".9"/>
</svg>
<span class="t" style="left:104px;top:303.15px;font-size:9.3px;color:#f0f0f0;transform:scaleX(0.9307);">5 Device circuit breaker / circuit breaker</span>
<svg class="b" style="left:90px;top:314.5px;" width="13" height="10" viewBox="0 0 13 10">
<rect x=".5" y=".8" width="11.500" height="8.400" rx="1" fill="#f4f0f0" stroke="#fff" stroke-width=".8"/><rect x="2.500" y="3" width="4.500" height="4" fill="#e01818"/><path d="M7 5h3.500M8 2.500h2.500" stroke="#c02020" stroke-width=".9"/>
</svg>
<span class="t" style="left:104px;top:315.63px;font-size:9.3px;color:#f0f0f0;transform:scaleX(0.9141);">6 Potential Distribution DC 24V General</span>
<svg class="b" style="left:90px;top:326.98px;" width="13" height="10" viewBox="0 0 13 10">
<rect x=".5" y=".8" width="11.500" height="8.400" rx="1" fill="#f4f0f0" stroke="#fff" stroke-width=".8"/><rect x="2.500" y="3" width="4.500" height="4" fill="#e01818"/><path d="M7 5h3.500M8 2.500h2.500" stroke="#c02020" stroke-width=".9"/>
</svg>
<span class="t" style="left:104px;top:328.11px;font-size:9.3px;color:#f0f0f0;transform:scaleX(0.9250);">7 Potential Distribution DC 24V PLC Tech</span>
</div>
<div class="b" style="left:260px;top:228px;width:13px;height:332px;background:#363636;"></div>
<svg class="b" style="left:260px;top:228px;" width="13" height="332" viewBox="0 0 13 332">
<path d="M3 9h7l-3.500-4zM3 323h7l-3.500 4z" fill="#d0d0d0"/><rect x="3.500" y="13" width="4.500" height="120" fill="#282828"/>
</svg>
<div class="b" style="left:0px;top:560px;width:273px;height:13px;background:#363636;"></div>
<svg class="b" style="left:0px;top:560px;" width="273" height="12" viewBox="0 0 273 12">
<path d="M8 2.500v7L4 6zM250 2.500v7l4-3.500z" fill="#d0d0d0"/><rect x="14" y="4" width="201" height="4.500" fill="#282828"/>
</svg>
<div class="b" style="left:0px;top:576px;width:275px;height:14.5px;background:#262626;"></div>
<div class="b" style="left:0px;top:574.5px;width:21px;height:16px;background:#3a3a3a;"></div>
<span class="t" style="left:1px;top:578.13px;font-size:9.3px;color:#f0f0f0;transform:scaleX(0.8521);">Tree</span>
<span class="t" style="left:27px;top:578.13px;font-size:9.3px;color:#f0f0f0;transform:scaleX(0.8983);">List</span>
<div class="b" style="left:0px;top:597.5px;width:275px;height:17px;background:#303030;"></div>
<span class="t" style="left:0px;top:601.13px;font-size:9.3px;color:#f0f0f0;transform:scaleX(0.9096);">Graphical preview - [EES]_Industry_Sample_Building_Auto...</span>
<svg class="b" style="left:234px;top:598px;" width="40" height="14" viewBox="0 0 40 14">
<path d="M3 5h6.500l-3.250 3.500z" fill="#dcdcdc"/><g fill="none" stroke="#d8d8d8" stroke-width="1"><path d="M18.800 3.500h3v4.300h-3zM17.700 8h5.200M20.300 8v3.300"/><path d="M31 4l5 5M36 4l-5 5" stroke-width="1.300"/></g>
</svg>
<div class="b" style="left:0px;top:615px;width:274px;height:120px;background:#ffffff;"></div>
<svg class="b" style="left:84px;top:617px;" width="115" height="82" viewBox="0 0 115 82">
<rect x=".8" y=".6" width="113" height="80.200" fill="#fff" stroke="#3a3a3a" stroke-width="1.200"/>
<path d="M2.800 2.500V75M112.600 2.500V75" stroke="#666" stroke-width=".6"/><path d="M2.500 9.800h110" stroke="#555" stroke-width="1.100"/>
<path d="M25.400 22V15.200H100" fill="none" stroke="#e8c030" stroke-width="1.100"/><path d="M8 13h12v8" fill="none" stroke="#b07070" stroke-width=".8"/>
<path d="M5 29H22" stroke="#20c020" stroke-width="1"/><path d="M22 29H109M28 22v7" stroke="#20c8f0" stroke-width="1.100" fill="none"/>
<path d="M35 32v10" stroke="#e03020" stroke-width="1"/><path d="M37.500 32v10M57.500 32v10" stroke="#2020c0" stroke-width=".8"/><path d="M55 29v13" stroke="#20d0d0" stroke-width="1"/>
<path d="M102.600 12v23M101 12h7" stroke="#777" stroke-width=".8" fill="none"/><path d="M7 19v6" stroke="#111" stroke-width="1.200"/>
<rect x="37.400" y="16" width="8.500" height="3" fill="#222"/><rect x="37.400" y="20" width="8.500" height="3" fill="#222"/><rect x="58.500" y="12.500" width="4" height="4" fill="#222"/><rect x="69" y="26" width="4.500" height="4" fill="#222"/>
<g fill="#2a2af4" fill-opacity=".92">
<circle cx="16.7" cy="13.200000000000001" r="1.900"/>
<circle cx="10.5" cy="15.700000000000001" r="1.900"/>
<circle cx="4.2" cy="21.7" r="1.900"/>
<circle cx="8.7" cy="30.0" r="1.900"/>
<circle cx="16.2" cy="27.8" r="1.900"/>
<circle cx="21.9" cy="29.5" r="1.900"/>
<circle cx="27.0" cy="27.0" r="1.900"/>
<circle cx="23.0" cy="21.7" r="1.900"/>
<circle cx="32.8" cy="30.6" r="1.900"/>
<circle cx="36.8" cy="28.3" r="1.900"/>
<circle cx="39.1" cy="30.6" r="1.900"/>
<circle cx="44.8" cy="27.0" r="1.900"/>
<circle cx="48.8" cy="27.0" r="1.900"/>
<circle cx="54.5" cy="30.6" r="1.900"/>
<circle cx="58.5" cy="30.6" r="1.900"/>
<circle cx="63.7" cy="27.0" r="1.900"/>
<circle cx="60.2" cy="36.3" r="1.900"/>
<circle cx="37.3" cy="38.099999999999994" r="1.900"/>
<circle cx="32.8" cy="41.5" r="1.900"/>
<circle cx="43.1" cy="18.0" r="1.900"/>
<circle cx="49.4" cy="18.0" r="1.900"/>
<circle cx="43.1" cy="22.0" r="1.900"/>
<circle cx="49.4" cy="22.0" r="1.900"/>
<circle cx="62.5" cy="15.200000000000001" r="1.900"/>
<circle cx="64.8" cy="19.2" r="1.900"/>
<circle cx="66.5" cy="12.3" r="1.900"/>
<circle cx="69.4" cy="12.9" r="1.900"/>
<circle cx="78.0" cy="14.0" r="1.900"/>
<circle cx="90.5" cy="12.9" r="1.900"/>
<circle cx="95.1" cy="12.9" r="1.900"/>
<circle cx="99.1" cy="13.5" r="1.900"/>
<circle cx="103.1" cy="15.200000000000001" r="1.900"/>
<circle cx="105.4" cy="20.3" r="1.900"/>
<circle cx="107.1" cy="27.8" r="1.900"/>
<circle cx="103.1" cy="28.900000000000002" r="1.900"/>
<circle cx="99.1" cy="26.6" r="1.900"/>
<circle cx="94.0" cy="27.0" r="1.900"/>
<circle cx="88.8" cy="27.0" r="1.900"/>
<circle cx="83.7" cy="27.8" r="1.900"/>
<circle cx="78.5" cy="26.6" r="1.900"/>
<circle cx="75.7" cy="25.5" r="1.900"/>
<circle cx="71.7" cy="28.900000000000002" r="1.900"/>
<circle cx="74.5" cy="32.9" r="1.900"/>
<circle cx="74.5" cy="35.199999999999996" r="1.900"/>
<circle cx="85.4" cy="38.099999999999994" r="1.900"/>
<circle cx="98.0" cy="38.099999999999994" r="1.900"/>
</g><g fill="#e8b030"><circle cx="88" cy="38" r="1.100"/><circle cx="100.500" cy="38" r="1.100"/><circle cx="108" cy="32" r="1.100"/></g>
<rect x="2.800" y="42.900" width="110" height="24" fill="#888"/><rect x="6.500" y="42.900" width="94" height="24" fill="#050505"/>
<rect x="10.5" y="43.500" width=".9" height="22.800" fill="#cfcfcf"/>
<rect x="13.8" y="43.500" width=".9" height="22.800" fill="#cfcfcf"/>
<rect x="17.3" y="43.500" width=".9" height="22.800" fill="#cfcfcf"/>
<rect x="20.8" y="43.500" width=".9" height="22.800" fill="#cfcfcf"/>
<rect x="24.3" y="43.500" width=".9" height="22.800" fill="#cfcfcf"/>
<rect x="27.5" y="43.500" width=".9" height="22.800" fill="#cfcfcf"/>
<rect x="31" y="43.500" width=".9" height="22.800" fill="#cfcfcf"/>
<rect x="34.5" y="43.500" width=".9" height="22.800" fill="#cfcfcf"/>
<rect x="38" y="43.500" width=".9" height="22.800" fill="#cfcfcf"/>
<rect x="42" y="43.500" width=".9" height="22.800" fill="#cfcfcf"/>
<rect x="45.5" y="43.500" width=".9" height="22.800" fill="#cfcfcf"/>
<rect x="49.5" y="43.500" width=".9" height="22.800" fill="#cfcfcf"/>
<rect x="53" y="43.500" width=".9" height="22.800" fill="#cfcfcf"/>
<rect x="56.5" y="43.500" width=".9" height="22.800" fill="#cfcfcf"/>
<rect x="60" y="43.500" width=".9" height="22.800" fill="#cfcfcf"/>
<rect x="64" y="43.500" width=".9" height="22.800" fill="#cfcfcf"/>
<rect x="67.5" y="43.500" width=".9" height="22.800" fill="#cfcfcf"/>
<rect x="71" y="43.500" width=".9" height="22.800" fill="#cfcfcf"/>
<rect x="74.5" y="43.500" width=".9" height="22.800" fill="#cfcfcf"/>
<rect x="78" y="43.500" width=".9" height="22.800" fill="#cfcfcf"/>
<rect x="81.5" y="43.500" width=".9" height="22.800" fill="#cfcfcf"/>
<rect x="85" y="43.500" width=".9" height="22.800" fill="#cfcfcf"/>
<rect x="89" y="43.500" width=".9" height="22.800" fill="#cfcfcf"/>
<rect x="93.5" y="43.500" width=".9" height="22.800" fill="#cfcfcf"/>
<rect x="100.500" y="42.900" width="12" height="24" fill="#fff"/><path d="M100.500 53.300h12M100.500 58.300h12" stroke="#111" stroke-width="2.600"/><path d="M100.500 66.300h12" stroke="#444" stroke-width="1.200"/>
<rect x="3" y="67" width="109.600" height="8" fill="#fff"/><path d="M2.500 75h110.500" stroke="#444" stroke-width=".8"/>
<rect x="1.400" y="75.400" width="111.800" height="4.800" fill="#3c3c3c"/><rect x="17" y="75.800" width="33" height="4.200" fill="#8c8c8c"/><rect x="51" y="76" width="12" height="3.600" fill="#fff"/><rect x="63.200" y="76" width="2" height="2.500" fill="#e84070"/><rect x="67" y="76" width="16" height="2.200" fill="#eee"/><rect x="67" y="78.200" width="16" height="1.600" fill="#999"/>
</svg>
<div class="b" style="left:0px;top:735px;width:1400px;height:18px;background:#494949;"></div>
<span class="t" style="left:4px;top:739.63px;font-size:9.3px;color:#f0f0f0;transform:scaleX(0.8644);">1 Lets start!</span>
<span class="t" style="left:287px;top:121.70px;font-size:9.8px;color:#1ba1e2;font-weight:bold;transform:scaleX(0.8853);">==ASP01=RLT01++GEB01&amp;PFB/1</span>
<svg class="b" style="left:434px;top:121px;" width="10" height="10" viewBox="0 0 10 10">
<path d="M2.500 2.500l5 5M7.500 2.500l-5 5" stroke="#e8e8e8" stroke-width="1.200"/>
</svg>
<div class="b" style="left:282px;top:134.5px;width:165px;height:2.5px;background:#1584d0;"></div>
<div class="b" style="left:1365px;top:120px;width:11px;height:11px;background:#262626;border:1px solid #3c3c3c;box-sizing:border-box;"></div>
<svg class="b" style="left:1365px;top:120px;" width="11" height="11" viewBox="0 0 11 11">
<path d="M2.500 4h6l-3 3.500z" fill="#b0b0b0"/>
</svg>
<div class="b" style="left:1379.5px;top:115px;width:20.5px;height:620px;background:#323232;"></div>
<div class="b" style="left:1398px;top:118px;width:2px;height:73px;background:#4a4a4a;"></div>
<span class="t" style="left:1394px;top:120px;font-size:9.6px;color:#f0f0f0;transform-origin:0 0;transform:rotate(90deg) scaleX(0.925)">Property overview</span>
<div class="b" style="left:281px;top:138px;width:1098px;height:597px;background:#3c3c3c;"></div>
<div class="b" style="left:1162px;top:140.5px;width:215.5px;height:575.5px;background:#2b2b2b;"></div>
<span class="t" style="left:1169.7px;top:144.04px;font-size:9.4px;color:#f0f0f0;transform:scaleX(0.8996);">Insert center</span>
<svg class="b" style="left:1350px;top:143px;" width="28" height="12" viewBox="0 0 28 12">
<path d="M3 4h6.500l-3.250 3.500z" fill="#e8e8e8"/><g fill="none" stroke="#d8d8d8" stroke-width="1"><path d="M17.800 2.300h3v4.200h-3zM16.700 6.700h5.200M19.300 6.700v3.200"/></g>
</svg>
<div class="b" style="left:1163px;top:159px;width:214px;height:16px;background:#2f2f2f;"></div>
<div class="b" style="left:1167px;top:159.5px;width:17.5px;height:15.5px;background:#333;border:1px solid #4a4a4a;box-sizing:border-box;"></div>
<svg class="b" style="left:1168px;top:160px;" width="16" height="15" viewBox="0 0 16 15">
<g fill="none" stroke="#e8e8e8" stroke-width="1"><rect x="2.500" y="2.500" width="8.500" height="9.500"/><path d="M2.500 5h8.500M5 5v7M7.500 5v7"/></g><circle cx="10.500" cy="9.500" r="2" fill="#333" stroke="#1ba1e2"/><path d="M12 11l2 2" stroke="#1ba1e2" stroke-width="1.200"/>
</svg>
<div class="b" style="left:1187.5px;top:159.5px;width:188.5px;height:15.5px;background:#333;border:1px solid #4a4a4a;box-sizing:border-box;"></div>
<span class="t" style="left:1193px;top:162.53px;font-size:9.3px;color:#8c8c8c;transform:scaleX(0.9120);">Find</span>
<svg class="b" style="left:1361px;top:161px;" width="14" height="13" viewBox="0 0 14 13">
<g fill="none" stroke="#1a78b8" stroke-width="1.300"><circle cx="8.500" cy="5" r="3.500"/><path d="M6 7.500l-4 4"/></g>
</svg>
<div class="b" style="left:1163px;top:175px;width:214px;height:9px;background:#1f1f1f;"></div>
<div class="b" style="left:1167px;top:184.5px;width:16.5px;height:16.5px;background:#2f2f2f;border:1px solid #444;box-sizing:border-box;"></div>
<svg class="b" style="left:1168px;top:186px;" width="14" height="14" viewBox="0 0 14 14">
<g fill="none" stroke="#808080" stroke-width="1"><path d="M2.500 7l4.500-4 4.500 4M3.500 6.500v5h7v-5M6 11.500v-3h2v3"/></g>
</svg>
<div class="b" style="left:1187.5px;top:184.5px;width:17.5px;height:16.5px;background:#2f2f2f;border:1px solid #444;box-sizing:border-box;"></div>
<svg class="b" style="left:1189px;top:186px;" width="14" height="14" viewBox="0 0 14 14">
<path d="M10.500 7h-7M6 4.500l-2.500 2.500 2.500 2.500" fill="none" stroke="#808080" stroke-width="1"/>
</svg>
<div class="b" style="left:1207.5px;top:184.5px;width:168.5px;height:16.5px;background:#2f2f2f;border:1px solid #484848;box-sizing:border-box;"></div>
<span class="t" style="left:1212.6px;top:187.84px;font-size:9.4px;color:#ffffff;transform:scaleX(0.9491);">Home</span>
<svg class="b" style="left:1242px;top:189px;" width="6" height="8" viewBox="0 0 6 8">
<path d="M1.500 1l3 3-3 3z" fill="#f0f0f0"/>
</svg>
<div class="b" style="left:1170px;top:273.5px;width:203.5px;height:21.5px;background:#4c4c4c;"></div>
<span class="t" style="left:1191.3px;top:214.44px;font-size:9.4px;color:#f0f0f0;transform:scaleX(0.8730);">Recent</span>
<svg class="b" style="left:1172px;top:211.0px;" width="16" height="16" viewBox="0 0 16 16">
<g fill="none" stroke="#f0f0f0" stroke-width="1.200"><circle cx="8" cy="8" r="6.300"/><path d="M8 4.500v4h3.500"/></g>
</svg>
<span class="t" style="left:1191.3px;top:236.36px;font-size:9.4px;color:#f0f0f0;transform:scaleX(0.8795);">Favorites</span>
<svg class="b" style="left:1172px;top:232.92000000000002px;" width="16" height="16" viewBox="0 0 16 16">
<path d="M8 1l2.100 4.600 4.900.5-3.700 3.300 1.100 4.900L8 11.800l-4.400 2.500 1.100-4.900L1 6.100l4.900-.5z" fill="#f4f4f4"/>
</svg>
<span class="t" style="left:1191.3px;top:258.28px;font-size:9.4px;color:#f0f0f0;transform:scaleX(0.8411);">Tags</span>
<svg class="b" style="left:1172px;top:254.84000000000003px;" width="16" height="16" viewBox="0 0 16 16">
<g fill="none" stroke="#f0f0f0" stroke-width="1.200"><path d="M4 14.500V4.500L8 1.500l4 3v10l-4-2.500z"/><circle cx="8" cy="5.500" r="1"/></g>
</svg>
<span class="t" style="left:1191.3px;top:280.20px;font-size:9.4px;color:#f0f0f0;transform:scaleX(0.8989);">Symbols</span>
<svg class="b" style="left:1172px;top:276.76px;" width="16" height="16" viewBox="0 0 16 16">
<g fill="none"><rect x="3.500" y="4.500" width="9" height="6.500" stroke="#f0f0f0" stroke-width="1.300"/><path d="M5.500 1.500v3M10.500 1.500v3M5.500 11v3M10.500 11v3" stroke="#e04040" stroke-width="1" stroke-dasharray="1 1"/></g>
</svg>
<span class="t" style="left:1191.3px;top:302.12px;font-size:9.4px;color:#f0f0f0;transform:scaleX(0.8734);">Devices</span>
<svg class="b" style="left:1172px;top:298.68px;" width="16" height="16" viewBox="0 0 16 16">
<g fill="none" stroke="#f0f0f0" stroke-width="1.200"><path d="M1 2.500h2.500l1.500 8h8M4 4.500h10.500l-1 4h-9"/></g><path d="M4.500 5h9.500l-.8 3H5z" fill="#f0f0f0"/><circle cx="6" cy="13" r="1.200" fill="#f0f0f0"/><circle cx="12" cy="13" r="1.200" fill="#f0f0f0"/>
</svg>
<span class="t" style="left:1191.3px;top:324.04px;font-size:9.4px;color:#f0f0f0;transform:scaleX(0.9333);">Window macros / symbol macros</span>
<svg class="b" style="left:1172px;top:320.6px;" width="16" height="16" viewBox="0 0 16 16">
<path d="M3 3.500l10 9M13 3.500l-10 9" stroke="#e02020" stroke-width="1" stroke-dasharray="1.500 1"/><rect x="5" y="5.800" width="6" height="4.400" fill="#2b2b2b" stroke="#f0f0f0" stroke-width="1.300"/><g fill="#1ba1e2"><rect x="1" y="1.500" width="3.200" height="3.200"/><rect x="11.800" y="1.500" width="3.200" height="3.200"/><rect x="1" y="11.300" width="3.200" height="3.200"/><rect x="11.800" y="11.300" width="3.200" height="3.200"/></g>
</svg>
<div class="b" style="left:1163px;top:609px;width:214px;height:7px;background:#3a3a3a;"></div>
<div class="b" style="left:1163px;top:616px;width:214px;height:100px;background:#272727;"></div>
<div class="b" style="left:1163px;top:608px;width:214px;height:1.5px;background:#242424;"></div>
<div class="b" style="left:283px;top:716px;width:1094px;height:17.5px;background:#4f4f4f;"></div>
<span class="t" style="left:289px;top:720.38px;font-size:9px;color:#f0f0f0;transform:scaleX(0.8661);">RX: 266.12</span>
<span class="t" style="left:339px;top:720.38px;font-size:9px;color:#f0f0f0;transform:scaleX(0.8789);">RY: 297.02</span>
<div class="b" style="left:1141px;top:717px;width:13px;height:15px;background:#303030;"></div>
<svg class="b" style="left:1124px;top:717px;" width="50" height="16" viewBox="0 0 50 16">
<g fill="none" stroke="#f0f0f0" stroke-width="1.500"><path d="M5.500 12V7a2.500 2.500 0 0 1 5 0v5"/><path d="M20.500 12V7a2.500 2.500 0 0 1 5 0v5"/></g><circle cx="4" cy="13.500" r="1" fill="#1ba1e2"/><g fill="#c0c0c0"><rect x="27.500" y="6" width="1.200" height="1.200"/><rect x="27.500" y="9" width="1.200" height="1.200"/><rect x="27.500" y="12" width="1.200" height="1.200"/></g><g fill="none" stroke="#1ba1e2" stroke-width="1"><circle cx="39.500" cy="8" r="2.800"/><path d="M39.500 2.500v11M34 8h11"/></g>
</svg>
<svg class="b" style="left:1180px;top:718px;" width="26" height="14" viewBox="0 0 26 14">
<g fill="#c8c8c8"><rect x="2" y="2" width="1.300" height="1.300"/><rect x="2" y="5" width="1.300" height="1.300"/><rect x="2" y="8" width="1.300" height="1.300"/><rect x="5" y="2" width="1.300" height="1.300"/><rect x="5" y="5" width="1.300" height="1.300"/><rect x="5" y="8" width="1.300" height="1.300"/><rect x="8" y="2" width="1.300" height="1.300"/><rect x="8" y="5" width="1.300" height="1.300"/><rect x="8" y="8" width="1.300" height="1.300"/></g><path d="M17.500 5.500l2 2 2-2" fill="none" stroke="#707070" stroke-width="1"/>
</svg>
<span class="t" style="left:1220.6px;top:720.21px;font-size:9.2px;color:#f0f0f0;transform:scaleX(0.9328);">Grid A: 1.00 mm</span>
<span class="t" style="left:1296px;top:720.21px;font-size:9.2px;color:#f0f0f0;transform:scaleX(0.9106);">Logic 1:1</span>
<svg class="b" style="left:1346px;top:717px;" width="30" height="16" viewBox="0 0 30 16">
<g fill="none" stroke="#c8c8c8" stroke-width="1.100"><circle cx="7" cy="6.500" r="3.800"/><path d="M9.800 9.300l3.200 3.200"/><circle cx="21.500" cy="6.500" r="3.800"/><path d="M24.300 9.300l3.200 3.200"/></g><path d="M3 12.500h6M18 12.500h6" stroke="#1a78b8" stroke-width="1.200"/>
</svg>
<span class="t" style="left:1334.5px;top:739.63px;font-size:9.3px;color:#f0f0f0;transform:scaleX(0.8264);">en_US</span>
<span class="t" style="left:1371.7px;top:739.63px;font-size:9.3px;color:#f0f0f0;transform:scaleX(0.9055);"># *</span>
<div class="b" style="left:0px;top:753px;width:1400px;height:34px;background:#dcdcdc;"></div>
<svg class="b" style="left:4px;top:762px;" width="20" height="20" viewBox="0 0 20 20">
<circle cx="9" cy="9.500" r="6.500" fill="#9aa4ae"/><path d="M5 12a5 5 0 0 1 8-5 3 3 0 0 1 1 5z" fill="#f4f6f8"/><circle cx="7" cy="8" r="2.500" fill="#b8c0c8"/>
</svg>
<svg class="b" style="left:620px;top:762px;" width="19" height="19" viewBox="0 0 19 19">
<g fill="#1a9cf0"><rect x="1" y="1" width="8" height="8"/><rect x="9.800" y="1" width="8" height="8" fill="#2aacf8"/><rect x="1" y="9.800" width="8" height="8" fill="#1590e8"/><rect x="9.800" y="9.800" width="8" height="8"/></g>
</svg>
<div class="b" style="left:649px;top:761px;width:72px;height:21px;background:#f6f6f6;border-radius:10.500px;"></div>
<svg class="b" style="left:662px;top:764px;" width="14" height="14" viewBox="0 0 14 14">
<g fill="none" stroke="#222" stroke-width="1.300"><circle cx="6" cy="6" r="3.800"/><path d="M8.800 8.800l3.400 3.400"/></g>
</svg>
<span class="t" style="left:679px;top:767.55px;font-size:8.8px;color:#222;transform:scaleX(0.9324);">Search</span>
<svg class="b" style="left:728px;top:762px;" width="20" height="18" viewBox="0 0 20 18">
<rect x="6.500" y="2" width="11" height="10" fill="#f0f0f0"/><rect x="8" y="4" width="8" height="7" fill="#c8c8c8"/><path d="M3 5.500v10h11" fill="none" stroke="#1a1a1a" stroke-width="2.500"/>
</svg>
<div class="b" style="left:757px;top:757px;width:28.5px;height:28px;background:#ececec;border-radius:3px;"></div>
<div class="b" style="left:762.5px;top:762px;width:18px;height:17.5px;background:#e6003c;border-radius:1.500px;"></div>
<svg class="b" style="left:762.5px;top:762px;" width="18" height="18" viewBox="0 0 18 18">
<path d="M9 4.500l5 9H4z" fill="none" stroke="#fff" stroke-width="1.100"/><path d="M9.600 7.500l-1.400 2.500h1.600l-1.200 2.500" fill="none" stroke="#fff" stroke-width=".8"/>
</svg>
<div class="b" style="left:766px;top:783px;width:10.5px;height:2px;background:#1a78d8;border-radius:1px;"></div>
<svg class="b" style="left:1254px;top:765px;" width="14" height="12" viewBox="0 0 14 12">
<path d="M3 8.500l4-4 4 4" fill="none" stroke="#222" stroke-width="1.300"/>
</svg>
<span class="t" style="left:1277.4px;top:768.05px;font-size:8.8px;color:#1a1a1a;transform:scaleX(0.8827);">DEU</span>
<svg class="b" style="left:1306px;top:763px;" width="34" height="16" viewBox="0 0 34 16">
<g fill="none" stroke="#222" stroke-width="1"><rect x="2" y="2.500" width="9" height="8"/><path d="M4 13.500h5M6.500 10.500v3"/><circle cx="11.500" cy="4" r="1.500" fill="#dcdcdc"/><path d="M11.500 5.500v3.500"/><path d="M19.500 6.500h1.500l2.500-2.500v8l-2.500-2.500h-1.500z"/><path d="M25 6a3 3 0 0 1 0 4M26.800 4.500a5 5 0 0 1 0 7M28.500 3.200a7 7 0 0 1 0 9.600" stroke-width=".9"/></g>
</svg>
<span class="t" style="left:1357.6px;top:760.25px;font-size:8.8px;color:#1a1a1a;transform:scaleX(0.9154);">3:16 PM</span>
<span class="t" style="left:1349.5px;top:771.75px;font-size:8.8px;color:#1a1a1a;transform:scaleX(0.9732);">3/14/2023</span>
<svg class="b" style="left:283px;top:140px" width="879" height="576" viewBox="283 140 879 576">
<rect x="283" y="140" width="879" height="576" fill="#fff"/>
<g stroke="#111" stroke-width="1.500" fill="none"><path d="M291.500 148.100V716M291.500 148.100H1162M304.300 148.100V716M317.800 164.200V716M304.300 164.200H1162M317.800 265H1162"/>
<path d="M461.3 148.100V164.200"/>
<path d="M591.8 148.100V164.200"/>
<path d="M722.3 148.100V164.200"/>
<path d="M852.8 148.100V164.200"/>
<path d="M983.3 148.100V164.200"/>
<path d="M1113.8 148.100V164.200"/>
</g>
<text x="382" y="160" font-size="7.300" font-weight="bold" text-anchor="middle" fill="#1c1cf6">0</text>
<text x="526.5" y="160" font-size="7.300" font-weight="bold" text-anchor="middle" fill="#1c1cf6">1</text>
<text x="657" y="160" font-size="7.300" font-weight="bold" text-anchor="middle" fill="#1c1cf6">2</text>
<text x="787.5" y="160" font-size="7.300" font-weight="bold" text-anchor="middle" fill="#1c1cf6">3</text>
<text x="918" y="160" font-size="7.300" font-weight="bold" text-anchor="middle" fill="#1c1cf6">4</text>
<text x="1048.5" y="160" font-size="7.300" font-weight="bold" text-anchor="middle" fill="#1c1cf6">5</text>
<text transform="translate(313.800 245.800) rotate(-90)" font-size="7.300" fill="#000" stroke="#000" stroke-width=".15" textLength="66" lengthAdjust="spacingAndGlyphs">BACS Characteristics</text>
<text transform="translate(313.800 481) rotate(-90)" font-size="7.300" fill="#000" stroke="#000" stroke-width=".15" textLength="52" lengthAdjust="spacingAndGlyphs">System diagram</text>
<text transform="translate(299.400 495.600) rotate(-90)" font-size="7.300" text-anchor="end" fill="#1c1cf6" stroke="#1c1cf6" stroke-width=".3" textLength="510.2" lengthAdjust="spacingAndGlyphs">The reproduction, distribution and utilization of this document as well as the communication of its contents are prohibited in as far as not expressly permitted.</text>
<g fill="none" stroke-width="3.500">
<path d="M361.500 324.500H533V386H546" stroke="#923a40"/>
<path d="M595 386H607.800V324.500H1162" stroke="#f6b300"/>
<path d="M546 419H533V494.100M361.500 494.100H606" stroke="#0cb00c"/>
<path d="M595 419H607.800V494.100M604 494.100H1162" stroke="#0cb4fc"/>
<g stroke-width="2.700"><path d="M722.500 526.600V645" stroke="#f01414"/><path d="M748.200 526.600V645" stroke="#1414f0"/>
<path d="M963.800 526.600V644.500" stroke="#12cccc"/><path d="M989.600 526.600V644.500" stroke="#10109c"/></g>
</g>
<g stroke="#444" stroke-width=".9"><path d="M722.500 645V654M748.200 645V654M963.800 644.500V654M989.600 644.500V654"/></g>
<path d="M527 494.300h12M533 488v6.300M601.500 494.300h12M607.800 488v6.300" stroke="#0a7a30" stroke-width="1.100" fill="none"/>
<path d="M344.900 324.500l8.400-8v4h8.300v8h-8.300v4z" fill="#fff" stroke="#1c1cf6" stroke-width="1.100"/>
<path d="M361.600 494.100l-8.400-8v4h-8.600v8h8.600v4z" fill="#fff" stroke="#1c1cf6" stroke-width="1.100"/>
<path d="M364.500 320.900l6.600 6.500M370.500 490.200l7 7" stroke="#111" stroke-width=".9"/>
<text x="359.600" y="339.500" font-size="4.200" text-anchor="middle" fill="#555">EHA</text><text x="359.400" y="509" font-size="4.200" text-anchor="middle" fill="#555">AUL</text>
<g fill="none" stroke="#1c1cf6" stroke-width="1"><rect x="545.750" y="378.100" width="49.650" height="49" fill="#fff"/><path d="M545.750 378.100L595.400 427.100M545.750 424.500L592.800 378.100M548.400 427.100L595.400 380.700M570.600 390.900l11.700 11.700-11.700 11.700-11.700-11.700z"/></g>
<rect x="418.3" y="307.3" width="17" height="33.5" fill="#fff" stroke="#1c1cf6" stroke-width="1.100"/>
<circle cx="426.8" cy="316.2" r="2.900" fill="#1c1cf6"/><path d="M422.1 319.5L431.5 312.9" stroke="#1c1cf6" stroke-width="1.100"/>
<circle cx="426.8" cy="324.1" r="2.900" fill="#1c1cf6"/><path d="M422.1 327.4L431.5 320.8" stroke="#1c1cf6" stroke-width="1.100"/>
<circle cx="426.8" cy="332.3" r="2.900" fill="#1c1cf6"/><path d="M422.1 335.6L431.5 329.0" stroke="#1c1cf6" stroke-width="1.100"/>
<path d="M418.3 307.3L422.1 319.5M435.3 340.8L431.5 329.0" stroke="#1c1cf6" stroke-width=".9" fill="none"/>
<rect x="411.8" y="477.5" width="17" height="33.5" fill="#fff" stroke="#1c1cf6" stroke-width="1.100"/>
<circle cx="420.3" cy="486.4" r="2.900" fill="#1c1cf6"/><path d="M415.6 489.7L425.0 483.1" stroke="#1c1cf6" stroke-width="1.100"/>
<circle cx="420.3" cy="494.2" r="2.900" fill="#1c1cf6"/><path d="M415.6 497.6L425.0 490.9" stroke="#1c1cf6" stroke-width="1.100"/>
<circle cx="420.3" cy="502.5" r="2.900" fill="#1c1cf6"/><path d="M415.6 505.8L425.0 499.2" stroke="#1c1cf6" stroke-width="1.100"/>
<path d="M411.8 477.5L415.6 489.7M428.8 511.0L425.0 499.2" stroke="#1c1cf6" stroke-width=".9" fill="none"/>
<rect x="565.3" y="477.5" width="17" height="33.5" fill="#fff" stroke="#1c1cf6" stroke-width="1.100"/>
<circle cx="573.8" cy="486.4" r="2.900" fill="#1c1cf6"/><path d="M569.0999999999999 489.7L578.5 483.1" stroke="#1c1cf6" stroke-width="1.100"/>
<circle cx="573.8" cy="494.2" r="2.900" fill="#1c1cf6"/><path d="M569.0999999999999 497.6L578.5 490.9" stroke="#1c1cf6" stroke-width="1.100"/>
<circle cx="573.8" cy="502.5" r="2.900" fill="#1c1cf6"/><path d="M569.0999999999999 505.8L578.5 499.2" stroke="#1c1cf6" stroke-width="1.100"/>
<path d="M565.3 477.5L569.0999999999999 489.7M582.3 511.0L578.5 499.2" stroke="#1c1cf6" stroke-width=".9" fill="none"/>
<rect x="516" y="438.4" width="33.5" height="17" fill="#fff" stroke="#1c1cf6" stroke-width="1.100"/>
<circle cx="524.5" cy="446.9" r="2.900" fill="#1c1cf6"/><path d="M521.2 451.59999999999997L527.8 442.2" stroke="#1c1cf6" stroke-width="1.100"/>
<circle cx="532.8" cy="446.9" r="2.900" fill="#1c1cf6"/><path d="M529.5 451.59999999999997L536.0 442.2" stroke="#1c1cf6" stroke-width="1.100"/>
<circle cx="541.0" cy="446.9" r="2.900" fill="#1c1cf6"/><path d="M537.7 451.59999999999997L544.3 442.2" stroke="#1c1cf6" stroke-width="1.100"/>
<path d="M516 438.4L521.2 451.59999999999997M549.5 455.4L544.3 442.2" stroke="#1c1cf6" stroke-width=".9" fill="none"/>
<path d="M556 448.300h19.200v29" fill="none" stroke="#111" stroke-width="1" stroke-dasharray="5 3.500"/>
<path d="M426.8 340.8V348.5" stroke="#f9d566" stroke-width=".9" stroke-dasharray="1.500 1"/>
<circle cx="426.8" cy="352.3" r="3.8" fill="#fff" stroke="#f9d566" stroke-width=".9"/><path d="M425.2 354.1V350.5L426.8 352.8L428.40000000000003 350.5V354.1" fill="none" stroke="#f9d566" stroke-width=".7"/>
<path d="M420.3 511V518.0" stroke="#f9d566" stroke-width=".9" stroke-dasharray="1.500 1"/>
<circle cx="420.3" cy="521.8" r="3.8" fill="#fff" stroke="#f9d566" stroke-width=".9"/><path d="M418.7 523.5999999999999V520.0L420.3 522.3L421.90000000000003 520.0V523.5999999999999" fill="none" stroke="#f9d566" stroke-width=".7"/>
<path d="M573.8 511V518.0" stroke="#f9d566" stroke-width=".9" stroke-dasharray="1.500 1"/>
<circle cx="573.8" cy="521.8" r="3.8" fill="#fff" stroke="#f9d566" stroke-width=".9"/><path d="M572.1999999999999 523.5999999999999V520.0L573.8 522.3L575.4 520.0V523.5999999999999" fill="none" stroke="#f9d566" stroke-width=".7"/>
<path d="M467.400 485.400h33.100v17h-33.100zM491.500 485.400l9 8.100-9 8.900" fill="#fff" stroke="#1c1cf6" stroke-width="1.100"/>
<path d="M470.500 502.400v8.400h27v-8.400" fill="none" stroke="#222" stroke-width=".9"/><circle cx="484" cy="510.800" r="3.300" fill="#fff" stroke="#f9d566" stroke-width=".9"/><text x="484" y="512.200" font-size="3.500" text-anchor="middle" fill="#555">dP</text>
<g fill="#fff" stroke="#111" stroke-width="1.300"><rect x="371" y="382.800" width="13.800" height="66"/>
<path d="M371 389.4h13.800M371 396.0h13.800M371 402.6h13.800M371 409.2h13.800M371 415.8h13.800M371 422.4h13.800M371 429.0h13.800M371 435.6h13.800M371 442.2h13.800M374.7 382.8v6.600M382.3 389.4v6.600M374.7 396.0v6.600M382.3 402.6v6.600M374.7 409.2v6.600M382.3 415.8v6.600M374.7 422.4v6.600M382.3 429.0v6.600M374.7 435.6v6.600M382.3 442.2v6.600"/></g>
<path d="M363.200 399.500V412.500" stroke="#f9d566" stroke-width="1.100"/><circle cx="363.200" cy="416.200" r="3.700" fill="#fff" stroke="#f9d566" stroke-width=".9"/>
<path d="M487.3 318.5V337" stroke="#f9d566" stroke-width="1.200"/><circle cx="487.3" cy="340.5" r="3.5" fill="#fff" stroke="#f9d566" stroke-width=".9"/>
<path d="M627.4 487.5V507.5" stroke="#f9d566" stroke-width="1.200"/><circle cx="627.4" cy="511.0" r="3.5" fill="#fff" stroke="#f9d566" stroke-width=".9"/>
<path d="M878.6 487.5V507.5" stroke="#f9d566" stroke-width="1.200"/><circle cx="878.6" cy="511.0" r="3.5" fill="#fff" stroke="#f9d566" stroke-width=".9"/>
<path d="M1064.6 488V507.3" stroke="#f9d566" stroke-width="1.200"/><circle cx="1064.6" cy="510.8" r="3.5" fill="#fff" stroke="#f9d566" stroke-width=".9"/>
<path d="M1133.3 318V337.5" stroke="#f9d566" stroke-width="1.200"/><circle cx="1133.3" cy="341.0" r="3.5" fill="#fff" stroke="#f9d566" stroke-width=".9"/>
<text x="1133.3" y="342.4" font-size="3.800" text-anchor="middle" fill="#555">P</text>
<path d="M826.500 506.500V489c0-2 3.500-2 3.500 0v10c0 2 3.500 2 3.500 0V487.500" fill="none" stroke="#f9d566" stroke-width="1"/><circle cx="826.500" cy="510" r="3.500" fill="#fff" stroke="#f9d566" stroke-width=".9"/><text x="826.500" y="511.400" font-size="3.800" text-anchor="middle" fill="#555">FS</text>
<g fill="#fff" stroke="#1c1cf6" stroke-width="1.100"><path d="M719 461.300h33v65.300h-33zM719 526.600L752 461.300"/><path d="M960.500 461.300h32.800v65.300h-32.800zM960.500 461.300l32.800 65.300M960.500 526.600l32.800-65.300"/></g>
<g stroke="#f9d566" stroke-width="1.200"><path d="M699.500 539.800H721M750 539.800H771M941 539.800H962.500M991 539.800H1012.300"/></g>
<circle cx="699.5" cy="539.800" r="3.400" fill="#f9d566"/>
<circle cx="771" cy="539.800" r="3.400" fill="#f9d566"/>
<circle cx="941" cy="539.800" r="3.400" fill="#f9d566"/>
<circle cx="1012.3" cy="539.800" r="3.400" fill="#f9d566"/>
<path d="M704.500 582H713.500" stroke="#f9d566" stroke-width=".8"/>
<circle cx="700.4" cy="582" r="3.6" fill="#fff" stroke="#f9d566" stroke-width=".9"/><path d="M698.8 583.8V580.2L700.4 582.5L702.0 580.2V583.8" fill="none" stroke="#f9d566" stroke-width=".7"/>
<circle cx="722.500" cy="582" r="8.800" fill="#fff" stroke="#1c1cf6" stroke-width="1.100"/><path d="M713.900 582l8.600-8.600 8.600 8.600" fill="none" stroke="#1c1cf6" stroke-width="1"/>
<path d="M722.500 601.600H730.400" stroke="#a01048" stroke-width="2"/><path d="M722.500 595.500V607.500" stroke="#a01030" stroke-width="2.600"/><path d="M739 601.600H748.200" stroke="#1414f0" stroke-width="2.300"/><path d="M730.400 593.400h8.600v16.600h-8.600zM730.400 593.400l8.600 16.600" fill="#fff" stroke="#1c1cf6" stroke-width="1"/><circle cx="739" cy="610" r="1.200" fill="#1c1cf6"/>
<path d="M743.7 619.5h9L748.2 628zM743.7 636.5h9L748.2 628z" fill="#fff" stroke="#1c1cf6" stroke-width="1"/><circle cx="748.2" cy="628" r="1.900" fill="#1414f0"/>
<path d="M750 627.500H756" stroke="#f9d566" stroke-width=".8"/>
<circle cx="760" cy="627.5" r="3.8" fill="#fff" stroke="#f9d566" stroke-width=".9"/><path d="M758.4 629.3V625.7L760 628.0L761.6 625.7V629.3" fill="none" stroke="#f9d566" stroke-width=".7"/>
<path d="M985.1 593.5h9L989.6 602zM985.1 610.5h9L989.6 602z" fill="#fff" stroke="#1c1cf6" stroke-width="1"/><circle cx="989.6" cy="602" r="1.900" fill="#10109c"/>
<path d="M991.500 602H998" stroke="#f9d566" stroke-width=".8"/>
<circle cx="1002.3" cy="602" r="3.8" fill="#fff" stroke="#f9d566" stroke-width=".9"/><path d="M1000.6999999999999 603.8V600.2L1002.3 602.5L1003.9 600.2V603.8" fill="none" stroke="#f9d566" stroke-width=".7"/>
<circle cx="722.3" cy="657" r="3.300" fill="#fff" stroke="#222" stroke-width=".9"/>
<text x="717.3" y="656" font-size="3.300" text-anchor="end" fill="#444">HW</text><text x="717.3" y="660" font-size="3.300" text-anchor="end" fill="#444">VL</text>
<circle cx="748.2" cy="657" r="3.300" fill="#fff" stroke="#222" stroke-width=".9"/>
<text x="753.2" y="656" font-size="3.300" text-anchor="start" fill="#444">HW</text><text x="753.2" y="660" font-size="3.300" text-anchor="start" fill="#444">RL</text>
<circle cx="963.8" cy="657.2" r="3.300" fill="#fff" stroke="#222" stroke-width=".9"/>
<text x="958.8" y="656.2" font-size="3.300" text-anchor="end" fill="#444">KW</text><text x="958.8" y="660.2" font-size="3.300" text-anchor="end" fill="#444">VL</text>
<circle cx="989.6" cy="657.2" r="3.300" fill="#fff" stroke="#222" stroke-width=".9"/>
<text x="994.6" y="656.2" font-size="3.300" text-anchor="start" fill="#444">KW</text><text x="994.6" y="660.2" font-size="3.300" text-anchor="start" fill="#444">RL</text>
<path d="M1019 324V298.600l4-4H1070l4 4V324" fill="none" stroke="#222" stroke-width="1"/>
<circle cx="1045.200" cy="285.500" r="8.300" fill="#fff" stroke="#f9d566" stroke-width="1"/><text x="1045.200" y="288" font-size="7" text-anchor="middle" fill="#222">V</text>
<g fill="#fff" stroke="#1c1cf6" stroke-width="1.100"><circle cx="1047.200" cy="324" r="24.800"/><path d="M1026 311.500L1056.500 301M1026 336.500L1056.500 347" fill="none"/><path d="M1047.500 324c-6-4-14-3-18.500 0 4.500 3 12.500 4 18.500 0zM1047.500 324c7-3 9.500-9.500 8.500-14.500-5 2.500-9 8.500-8.500 14.500zM1047.500 324c0.500 6 3.500 12 8.500 14.500 1-5-1.500-11.500-8.500-14.500z"/></g>
<circle cx="1045.800" cy="361" r="8" fill="#fff" stroke="#f9d566" stroke-width="1"/><text x="1045.800" y="364" font-size="8" text-anchor="middle" fill="#f9d566">M</text><path d="M1041.500 370h8.500v8.500h-8.500zM1045.800 369v9.500M1044 372.500v3.500M1047.600 372.500v3.500" fill="none" stroke="#f9d566" stroke-width=".9"/>
<path d="M1139.700 494V468l3.400-3.400H1165" fill="none" stroke="#222" stroke-width="1"/>
<circle cx="1168" cy="494" r="24.800" fill="#fff" stroke="#1c1cf6" stroke-width="1.100"/><path d="M1158.500 478v5M1158.500 504v5" fill="none" stroke="#1c1cf6" stroke-width="1.100"/>
<circle cx="1167.500" cy="455.500" r="8.300" fill="#fff" stroke="#f9d566" stroke-width="1"/><circle cx="1168" cy="531" r="8" fill="#fff" stroke="#f9d566" stroke-width="1"/>
<rect x="745" y="340.2" width="43" height="30" rx="2.500" fill="#fff" stroke="#333" stroke-width="1"/><rect x="747.200" y="342.4" width="38.600" height="25.600" rx="1.200" fill="#d8d8d8" stroke="#333" stroke-width=".9"/><rect x="749" y="344.2" width="35" height="21" fill="#ececec" stroke="#bbb" stroke-width=".5"/>
<path d="M751 350.2h22M751 356.2h12l3-3h10M775 348.2h7v12h-7z" fill="none" stroke="#aaa" stroke-width=".6"/><rect x="779" y="352.2" width="1.500" height="1.500" fill="#e04060"/>
<rect x="745" y="389.5" width="43" height="30" rx="2.500" fill="#fff" stroke="#333" stroke-width="1"/><rect x="747.200" y="391.7" width="38.600" height="25.600" rx="1.200" fill="#d8d8d8" stroke="#333" stroke-width=".9"/><rect x="749" y="393.5" width="35" height="21" fill="#ececec" stroke="#bbb" stroke-width=".5"/>
<path d="M754 410.5l10-9h14l3 9z" fill="#b8b8b8"/><path d="M760 407.5l6-5h8" fill="none" stroke="#999" stroke-width=".6"/>
<rect x="839.200" y="340.200" width="36.600" height="26.800" rx="3" fill="#d4d4d4" stroke="#333" stroke-width="1"/><path d="M839.200 346.500h36.600" stroke="#333" stroke-width=".8"/><circle cx="857.500" cy="356.300" r="8" fill="#e0e0e0" stroke="#222" stroke-width="1"/><path d="M857.500 350.500v6l3 3.800" fill="none" stroke="#222" stroke-width=".9"/><text x="857.500" y="345.500" font-size="4" text-anchor="middle" fill="#666">TIME</text>
<rect x="837.200" y="389.500" width="36.800" height="26.600" rx="3" fill="#d4d4d4" stroke="#333" stroke-width="1"/><path d="M837.200 395.800h36.800M847.500 393v6M864 393v6" stroke="#333" stroke-width=".8"/><rect x="843.500" y="399.500" width="24.500" height="12" fill="#3a3a3a"/><path d="M849.600 399.500v12M855.700 399.500v12M861.800 399.500v12M843.500 403.500h24.500M843.500 407.500h24.500" stroke="#999" stroke-width=".6"/><text x="855.500" y="394.800" font-size="4.500" text-anchor="middle" fill="#444">CAL</text>
<text x="745" y="335.5" font-size="6.400" font-weight="bold" fill="#1c1cf6" textLength="43" lengthAdjust="spacingAndGlyphs">Graphic plant</text>
<text x="839.2" y="335.8" font-size="6.400" font-weight="bold" fill="#1c1cf6" textLength="49" lengthAdjust="spacingAndGlyphs">Time programs</text>
<text x="745" y="385.2" font-size="6.400" font-weight="bold" fill="#1c1cf6" textLength="78" lengthAdjust="spacingAndGlyphs">Graphic control diagram</text>
<text x="840" y="384.5" font-size="6.400" font-weight="bold" fill="#1c1cf6" textLength="28" lengthAdjust="spacingAndGlyphs">Calendar</text>
<circle cx="487.3" cy="301.6" r="16.5" fill="#fff" stroke="#1c1cf6" stroke-width="1.300"/><path d="M470.8 301.6H503.8" stroke="#1c1cf6" stroke-width="1.300"/>
<text x="487.3" y="295.40000000000003" font-size="7.300" text-anchor="middle" fill="#000" stroke="#000" stroke-width=".25" textLength="13.2" lengthAdjust="spacingAndGlyphs">TFO</text><text x="487.3" y="313.1" font-size="7.300" text-anchor="middle" fill="#000" stroke="#000" stroke-width=".25" textLength="8.0" lengthAdjust="spacingAndGlyphs">01</text>
<circle cx="400.9" cy="343.7" r="16.5" fill="#fff" stroke="#1c1cf6" stroke-width="1.300"/><path d="M384.4 343.7H417.4" stroke="#1c1cf6" stroke-width="1.300"/>
<text x="400.9" y="337.5" font-size="7.300" text-anchor="middle" fill="#000" stroke="#000" stroke-width=".25" textLength="12.3" lengthAdjust="spacingAndGlyphs">LKA</text><text x="400.9" y="355.2" font-size="7.300" text-anchor="middle" fill="#000" stroke="#000" stroke-width=".25" textLength="8.0" lengthAdjust="spacingAndGlyphs">01</text>
<circle cx="337.3" cy="402.8" r="16.5" fill="#fff" stroke="#1c1cf6" stroke-width="1.300"/><path d="M320.8 402.8H353.8" stroke="#1c1cf6" stroke-width="1.300"/>
<text x="337.3" y="396.6" font-size="7.300" text-anchor="middle" fill="#000" stroke="#000" stroke-width=".25" textLength="13.4" lengthAdjust="spacingAndGlyphs">TAU</text><text x="337.3" y="414.3" font-size="7.300" text-anchor="middle" fill="#000" stroke="#000" stroke-width=".25" textLength="8.0" lengthAdjust="spacingAndGlyphs">01</text>
<circle cx="484" cy="468.1" r="16.5" fill="#fff" stroke="#1c1cf6" stroke-width="1.300"/><path d="M467.5 468.1H500.5" stroke="#1c1cf6" stroke-width="1.300"/>
<text x="484" y="461.90000000000003" font-size="7.300" text-anchor="middle" fill="#000" stroke="#000" stroke-width=".25" textLength="10.2" lengthAdjust="spacingAndGlyphs">LFI</text><text x="484" y="479.6" font-size="7.300" text-anchor="middle" fill="#000" stroke="#000" stroke-width=".25" textLength="8.0" lengthAdjust="spacingAndGlyphs">01</text>
<circle cx="394.5" cy="513.8" r="16.5" fill="#fff" stroke="#1c1cf6" stroke-width="1.300"/><path d="M378.0 513.8H411.0" stroke="#1c1cf6" stroke-width="1.300"/>
<text x="394.5" y="507.59999999999997" font-size="7.300" text-anchor="middle" fill="#000" stroke="#000" stroke-width=".25" textLength="12.3" lengthAdjust="spacingAndGlyphs">LKA</text><text x="394.5" y="525.3" font-size="7.300" text-anchor="middle" fill="#000" stroke="#000" stroke-width=".25" textLength="8.0" lengthAdjust="spacingAndGlyphs">02</text>
<circle cx="547.5" cy="513.8" r="16.5" fill="#fff" stroke="#1c1cf6" stroke-width="1.300"/><path d="M531.0 513.8H564.0" stroke="#1c1cf6" stroke-width="1.300"/>
<text x="547.5" y="507.59999999999997" font-size="7.300" text-anchor="middle" fill="#000" stroke="#000" stroke-width=".25" textLength="12.3" lengthAdjust="spacingAndGlyphs">LKA</text><text x="547.5" y="525.3" font-size="7.300" text-anchor="middle" fill="#000" stroke="#000" stroke-width=".25" textLength="8.0" lengthAdjust="spacingAndGlyphs">03</text>
<circle cx="627.4" cy="470.7" r="16.5" fill="#fff" stroke="#1c1cf6" stroke-width="1.300"/><path d="M610.9 470.7H643.9" stroke="#1c1cf6" stroke-width="1.300"/>
<text x="627.4" y="464.5" font-size="7.300" text-anchor="middle" fill="#000" stroke="#000" stroke-width=".25" textLength="15.7" lengthAdjust="spacingAndGlyphs">TNW</text><text x="627.4" y="482.2" font-size="7.300" text-anchor="middle" fill="#000" stroke="#000" stroke-width=".25" textLength="8.0" lengthAdjust="spacingAndGlyphs">01</text>
<circle cx="699.1" cy="517" r="16.5" fill="#fff" stroke="#1c1cf6" stroke-width="1.300"/><path d="M682.6 517H715.6" stroke="#1c1cf6" stroke-width="1.300"/>
<text x="699.1" y="510.8" font-size="7.300" text-anchor="middle" fill="#000" stroke="#000" stroke-width=".25" textLength="12.3" lengthAdjust="spacingAndGlyphs">TVL</text><text x="699.1" y="528.5" font-size="7.300" text-anchor="middle" fill="#000" stroke="#000" stroke-width=".25" textLength="8.0" lengthAdjust="spacingAndGlyphs">01</text>
<circle cx="770.8" cy="517" r="16.5" fill="#fff" stroke="#1c1cf6" stroke-width="1.300"/><path d="M754.3 517H787.3" stroke="#1c1cf6" stroke-width="1.300"/>
<text x="770.8" y="510.8" font-size="7.300" text-anchor="middle" fill="#000" stroke="#000" stroke-width=".25" textLength="12.4" lengthAdjust="spacingAndGlyphs">TRL</text><text x="770.8" y="528.5" font-size="7.300" text-anchor="middle" fill="#000" stroke="#000" stroke-width=".25" textLength="8.0" lengthAdjust="spacingAndGlyphs">01</text>
<circle cx="832.8" cy="470.7" r="16.5" fill="#fff" stroke="#1c1cf6" stroke-width="1.300"/><path d="M816.3 470.7H849.3" stroke="#1c1cf6" stroke-width="1.300"/>
<text x="832.8" y="464.5" font-size="7.300" text-anchor="middle" fill="#000" stroke="#000" stroke-width=".25" textLength="14.5" lengthAdjust="spacingAndGlyphs">FSW</text><text x="832.8" y="482.2" font-size="7.300" text-anchor="middle" fill="#000" stroke="#000" stroke-width=".25" textLength="8.0" lengthAdjust="spacingAndGlyphs">01</text>
<circle cx="878.6" cy="470.7" r="16.5" fill="#fff" stroke="#1c1cf6" stroke-width="1.300"/><path d="M862.1 470.7H895.1" stroke="#1c1cf6" stroke-width="1.300"/>
<text x="878.6" y="464.5" font-size="7.300" text-anchor="middle" fill="#000" stroke="#000" stroke-width=".25" textLength="12.8" lengthAdjust="spacingAndGlyphs">TNL</text><text x="878.6" y="482.2" font-size="7.300" text-anchor="middle" fill="#000" stroke="#000" stroke-width=".25" textLength="8.0" lengthAdjust="spacingAndGlyphs">01</text>
<circle cx="940.8" cy="517" r="16.5" fill="#fff" stroke="#1c1cf6" stroke-width="1.300"/><path d="M924.3 517H957.3" stroke="#1c1cf6" stroke-width="1.300"/>
<text x="940.8" y="510.8" font-size="7.300" text-anchor="middle" fill="#000" stroke="#000" stroke-width=".25" textLength="12.3" lengthAdjust="spacingAndGlyphs">TVL</text><text x="940.8" y="528.5" font-size="7.300" text-anchor="middle" fill="#000" stroke="#000" stroke-width=".25" textLength="8.0" lengthAdjust="spacingAndGlyphs">02</text>
<circle cx="1012.5" cy="517" r="16.5" fill="#fff" stroke="#1c1cf6" stroke-width="1.300"/><path d="M996.0 517H1029.0" stroke="#1c1cf6" stroke-width="1.300"/>
<text x="1012.5" y="510.8" font-size="7.300" text-anchor="middle" fill="#000" stroke="#000" stroke-width=".25" textLength="12.4" lengthAdjust="spacingAndGlyphs">TRL</text><text x="1012.5" y="528.5" font-size="7.300" text-anchor="middle" fill="#000" stroke="#000" stroke-width=".25" textLength="8.0" lengthAdjust="spacingAndGlyphs">02</text>
<circle cx="1064.6" cy="471" r="16.5" fill="#fff" stroke="#1c1cf6" stroke-width="1.300"/><path d="M1048.1 471H1081.1" stroke="#1c1cf6" stroke-width="1.300"/>
<text x="1064.6" y="464.8" font-size="7.300" text-anchor="middle" fill="#000" stroke="#000" stroke-width=".25" textLength="13.4" lengthAdjust="spacingAndGlyphs">TNK</text><text x="1064.6" y="482.5" font-size="7.300" text-anchor="middle" fill="#000" stroke="#000" stroke-width=".25" textLength="8.0" lengthAdjust="spacingAndGlyphs">01</text>
<circle cx="770.9" cy="608.8" r="16.5" fill="#fff" stroke="#1c1cf6" stroke-width="1.300"/><path d="M754.4 608.8H787.4" stroke="#1c1cf6" stroke-width="1.300"/>
<text x="770.9" y="602.5999999999999" font-size="7.300" text-anchor="middle" fill="#000" stroke="#000" stroke-width=".25" textLength="13.3" lengthAdjust="spacingAndGlyphs">VEN</text><text x="770.9" y="620.3" font-size="7.300" text-anchor="middle" fill="#000" stroke="#000" stroke-width=".25" textLength="8.0" lengthAdjust="spacingAndGlyphs">01</text>
<circle cx="1012.5" cy="582.3" r="16.5" fill="#fff" stroke="#1c1cf6" stroke-width="1.300"/><path d="M996.0 582.3H1029.0" stroke="#1c1cf6" stroke-width="1.300"/>
<text x="1012.5" y="576.0999999999999" font-size="7.300" text-anchor="middle" fill="#000" stroke="#000" stroke-width=".25" textLength="13.3" lengthAdjust="spacingAndGlyphs">VEN</text><text x="1012.5" y="593.8" font-size="7.300" text-anchor="middle" fill="#000" stroke="#000" stroke-width=".25" textLength="8.0" lengthAdjust="spacingAndGlyphs">02</text>
<circle cx="688" cy="645" r="16.5" fill="#fff" stroke="#1c1cf6" stroke-width="1.300"/><path d="M671.5 645H704.5" stroke="#1c1cf6" stroke-width="1.300"/>
<text x="688" y="638.8" font-size="7.300" text-anchor="middle" fill="#000" stroke="#000" stroke-width=".25" textLength="12.1" lengthAdjust="spacingAndGlyphs">PPE</text><text x="688" y="656.5" font-size="7.300" text-anchor="middle" fill="#000" stroke="#000" stroke-width=".25" textLength="8.0" lengthAdjust="spacingAndGlyphs">01</text>
<circle cx="806.9" cy="357" r="16.5" fill="#fff" stroke="#1c1cf6" stroke-width="1.300"/><path d="M790.4 357H823.4" stroke="#1c1cf6" stroke-width="1.300"/>
<text x="806.9" y="350.8" font-size="7.300" text-anchor="middle" fill="#000" stroke="#000" stroke-width=".25" textLength="11.1" lengthAdjust="spacingAndGlyphs">PIC</text><text x="806.9" y="368.5" font-size="7.300" text-anchor="middle" fill="#000" stroke="#000" stroke-width=".25" textLength="8.0" lengthAdjust="spacingAndGlyphs">01</text>
<circle cx="806.9" cy="405.7" r="16.5" fill="#fff" stroke="#1c1cf6" stroke-width="1.300"/><path d="M790.4 405.7H823.4" stroke="#1c1cf6" stroke-width="1.300"/>
<text x="806.9" y="399.5" font-size="7.300" text-anchor="middle" fill="#000" stroke="#000" stroke-width=".25" textLength="11.1" lengthAdjust="spacingAndGlyphs">PIC</text><text x="806.9" y="417.2" font-size="7.300" text-anchor="middle" fill="#000" stroke="#000" stroke-width=".25" textLength="8.0" lengthAdjust="spacingAndGlyphs">02</text>
<circle cx="894.9" cy="356.5" r="16.5" fill="#fff" stroke="#1c1cf6" stroke-width="1.300"/><path d="M878.4 356.5H911.4" stroke="#1c1cf6" stroke-width="1.300"/>
<text x="894.9" y="350.3" font-size="7.300" text-anchor="middle" fill="#000" stroke="#000" stroke-width=".25" textLength="12.6" lengthAdjust="spacingAndGlyphs">TIM</text><text x="894.9" y="368.0" font-size="7.300" text-anchor="middle" fill="#000" stroke="#000" stroke-width=".25" textLength="8.0" lengthAdjust="spacingAndGlyphs">01</text>
<circle cx="894.1" cy="405.7" r="16.5" fill="#fff" stroke="#1c1cf6" stroke-width="1.300"/><path d="M877.6 405.7H910.6" stroke="#1c1cf6" stroke-width="1.300"/>
<text x="894.1" y="399.5" font-size="7.300" text-anchor="middle" fill="#000" stroke="#000" stroke-width=".25" textLength="12.4" lengthAdjust="spacingAndGlyphs">CAL</text><text x="894.1" y="417.2" font-size="7.300" text-anchor="middle" fill="#000" stroke="#000" stroke-width=".25" textLength="8.0" lengthAdjust="spacingAndGlyphs">01</text>
<circle cx="1087.5" cy="282" r="16.5" fill="#fff" stroke="#1c1cf6" stroke-width="1.300"/><path d="M1071.0 282H1104.0" stroke="#1c1cf6" stroke-width="1.300"/>
<text x="1087.5" y="275.8" font-size="7.300" text-anchor="middle" fill="#000" stroke="#000" stroke-width=".25" textLength="13.0" lengthAdjust="spacingAndGlyphs">VAB</text><text x="1087.5" y="293.5" font-size="7.300" text-anchor="middle" fill="#000" stroke="#000" stroke-width=".25" textLength="8.0" lengthAdjust="spacingAndGlyphs">01</text>
<circle cx="1133.3" cy="301" r="16.5" fill="#fff" stroke="#1c1cf6" stroke-width="1.300"/><path d="M1116.8 301H1149.8" stroke="#1c1cf6" stroke-width="1.300"/>
<text x="1133.3" y="294.8" font-size="7.300" text-anchor="middle" fill="#000" stroke="#000" stroke-width=".25" textLength="12.7" lengthAdjust="spacingAndGlyphs">PAB</text><text x="1133.3" y="312.5" font-size="7.300" text-anchor="middle" fill="#000" stroke="#000" stroke-width=".25" textLength="8.0" lengthAdjust="spacingAndGlyphs">01</text>
<circle cx="1074.5" cy="356.8" r="16.5" fill="#fff" stroke="#1c1cf6" stroke-width="1.300"/><path d="M1058.0 356.8H1091.0" stroke="#1c1cf6" stroke-width="1.300"/>
<text x="1074.5" y="350.6" font-size="7.300" text-anchor="middle" fill="#000" stroke="#000" stroke-width=".25" textLength="13.0" lengthAdjust="spacingAndGlyphs">ABV</text><text x="1074.5" y="368.3" font-size="7.300" text-anchor="middle" fill="#000" stroke="#000" stroke-width=".25" textLength="8.0" lengthAdjust="spacingAndGlyphs">01</text>
<circle cx="1074.5" cy="389.6" r="16.5" fill="#fff" stroke="#1c1cf6" stroke-width="1.300"/><path d="M1058.0 389.6H1091.0" stroke="#1c1cf6" stroke-width="1.300"/>
<text x="1074.5" y="383.40000000000003" font-size="7.300" text-anchor="middle" fill="#000" stroke="#000" stroke-width=".25" textLength="12.7" lengthAdjust="spacingAndGlyphs">REP</text><text x="1074.5" y="401.1" font-size="7.300" text-anchor="middle" fill="#000" stroke="#000" stroke-width=".25" textLength="8.0" lengthAdjust="spacingAndGlyphs">01</text>
<text x="426.8" y="362.7" font-size="5" font-weight="bold" text-anchor="middle" fill="#000" stroke="#000" stroke-width="0.18">QN2</text>
<text x="426.8" y="368.3" font-size="5.2" text-anchor="middle" fill="#9fb060" stroke="#9fb060" stroke-width="0.08" textLength="54.7" lengthAdjust="spacingAndGlyphs">=SSA01+F1&amp;EFS/210.1</text>
<text x="426.8" y="374.6" font-size="5.2" text-anchor="middle" fill="#078585" stroke="#078585" stroke-width="0.22" textLength="47.6" lengthAdjust="spacingAndGlyphs">EPL_EES.BA0206003</text>
<text x="426.8" y="381.0" font-size="5.2" text-anchor="middle" fill="#078585" stroke="#078585" stroke-width="0.22" textLength="40.2" lengthAdjust="spacingAndGlyphs">Damper actuator,</text>
<text x="426.8" y="387.3" font-size="5.2" text-anchor="middle" fill="#078585" stroke="#078585" stroke-width="0.22" textLength="17.8" lengthAdjust="spacingAndGlyphs">3-point,</text>
<text x="426.8" y="393.6" font-size="5.2" text-anchor="middle" fill="#078585" stroke="#078585" stroke-width="0.22" textLength="43.5" lengthAdjust="spacingAndGlyphs">EL:OPEN&amp;CLOSE 4</text>
<text x="426.8" y="399.9" font-size="5.2" text-anchor="middle" fill="#078585" stroke="#078585" stroke-width="0.22" textLength="43.8" lengthAdjust="spacingAndGlyphs">Nm, &lt;0,8 m², 24 V</text>
<text x="487.3" y="349.8" font-size="5" font-weight="bold" text-anchor="middle" fill="#000" stroke="#000" stroke-width="0.18">BT2</text>
<text x="487.3" y="355.9" font-size="5.2" text-anchor="middle" fill="#9fb060" stroke="#9fb060" stroke-width="0.08" textLength="54.7" lengthAdjust="spacingAndGlyphs">=SSA01+F1&amp;EFS/100.1</text>
<text x="487.3" y="362.2" font-size="5.2" text-anchor="middle" fill="#078585" stroke="#078585" stroke-width="0.22" textLength="47.6" lengthAdjust="spacingAndGlyphs">EPL_EES.BA0101009</text>
<text x="487.3" y="368.6" font-size="5.2" text-anchor="middle" fill="#078585" stroke="#078585" stroke-width="0.22" textLength="40.5" lengthAdjust="spacingAndGlyphs">Duct temperature</text>
<text x="487.3" y="374.9" font-size="5.2" text-anchor="middle" fill="#078585" stroke="#078585" stroke-width="0.22" textLength="37.0" lengthAdjust="spacingAndGlyphs">sensor, PT1000,</text>
<text x="487.3" y="381.2" font-size="5.2" text-anchor="middle" fill="#078585" stroke="#078585" stroke-width="0.22" textLength="34.9" lengthAdjust="spacingAndGlyphs">length 150 mm</text>
<text x="369.6" y="428.1" font-size="5" font-weight="bold" text-anchor="end" fill="#000" stroke="#000" stroke-width="0.18">BT1</text>
<text x="369.6" y="434.2" font-size="5.2" text-anchor="end" fill="#9fb060" stroke="#9fb060" stroke-width="0.08" textLength="54.7" lengthAdjust="spacingAndGlyphs">=SSA01+F1&amp;EFS/101.1</text>
<text x="369.6" y="440.5" font-size="5.2" text-anchor="end" fill="#078585" stroke="#078585" stroke-width="0.22" textLength="47.6" lengthAdjust="spacingAndGlyphs">EPL_EES.BA0106001</text>
<text x="369.6" y="446.9" font-size="5.2" text-anchor="end" fill="#078585" stroke="#078585" stroke-width="0.22" textLength="48.6" lengthAdjust="spacingAndGlyphs">Outdoor temperature</text>
<text x="369.6" y="453.2" font-size="5.2" text-anchor="end" fill="#078585" stroke="#078585" stroke-width="0.22" textLength="35.4" lengthAdjust="spacingAndGlyphs">sensor, PT1000</text>
<text x="420.2" y="532.3" font-size="5" font-weight="bold" text-anchor="middle" fill="#000" stroke="#000" stroke-width="0.18">QN1</text>
<text x="420.2" y="538.4" font-size="5.2" text-anchor="middle" fill="#9fb060" stroke="#9fb060" stroke-width="0.08" textLength="54.7" lengthAdjust="spacingAndGlyphs">=SSA01+F1&amp;EFS/211.1</text>
<text x="420.2" y="544.7" font-size="5.2" text-anchor="middle" fill="#078585" stroke="#078585" stroke-width="0.22" textLength="47.6" lengthAdjust="spacingAndGlyphs">EPL_EES.BA0206003</text>
<text x="420.2" y="551.1" font-size="5.2" text-anchor="middle" fill="#078585" stroke="#078585" stroke-width="0.22" textLength="40.2" lengthAdjust="spacingAndGlyphs">Damper actuator,</text>
<text x="420.2" y="557.4" font-size="5.2" text-anchor="middle" fill="#078585" stroke="#078585" stroke-width="0.22" textLength="17.8" lengthAdjust="spacingAndGlyphs">3-point,</text>
<text x="420.2" y="563.7" font-size="5.2" text-anchor="middle" fill="#078585" stroke="#078585" stroke-width="0.22" textLength="43.5" lengthAdjust="spacingAndGlyphs">EL:OPEN&amp;CLOSE 4</text>
<text x="420.2" y="570.0" font-size="5.2" text-anchor="middle" fill="#078585" stroke="#078585" stroke-width="0.22" textLength="43.8" lengthAdjust="spacingAndGlyphs">Nm, &lt;0,8 m², 24 V</text>
<text x="484" y="520.9" font-size="5" font-weight="bold" text-anchor="middle" fill="#000" stroke="#000" stroke-width="0.18">BP1</text>
<text x="484" y="527.2" font-size="5.2" text-anchor="middle" fill="#9fb060" stroke="#9fb060" stroke-width="0.08" textLength="54.7" lengthAdjust="spacingAndGlyphs">=SSA01+F1&amp;EFS/130.1</text>
<text x="484" y="533.5" font-size="5.2" text-anchor="middle" fill="#078585" stroke="#078585" stroke-width="0.22" textLength="47.6" lengthAdjust="spacingAndGlyphs">EPL_EES.BA0110001</text>
<text x="484" y="539.9" font-size="5.2" text-anchor="middle" fill="#078585" stroke="#078585" stroke-width="0.22" textLength="46.4" lengthAdjust="spacingAndGlyphs">Differential pressure</text>
<text x="484" y="546.2" font-size="5.2" text-anchor="middle" fill="#078585" stroke="#078585" stroke-width="0.22" textLength="29.0" lengthAdjust="spacingAndGlyphs">switch, Filter</text>
<text x="484" y="552.5" font-size="5.2" text-anchor="middle" fill="#078585" stroke="#078585" stroke-width="0.22" textLength="44.3" lengthAdjust="spacingAndGlyphs">monitoring, 50 Pa -</text>
<text x="484" y="558.8" font-size="5.2" text-anchor="middle" fill="#078585" stroke="#078585" stroke-width="0.22" textLength="15.7" lengthAdjust="spacingAndGlyphs">400 Pa</text>
<text x="573.8" y="532.3" font-size="5" font-weight="bold" text-anchor="middle" fill="#000" stroke="#000" stroke-width="0.18">QN3</text>
<text x="573.8" y="538.4" font-size="5.2" text-anchor="middle" fill="#9fb060" stroke="#9fb060" stroke-width="0.08" textLength="54.7" lengthAdjust="spacingAndGlyphs">=SSA01+F1&amp;EFS/200.1</text>
<text x="573.8" y="544.7" font-size="5.2" text-anchor="middle" fill="#078585" stroke="#078585" stroke-width="0.22" textLength="47.6" lengthAdjust="spacingAndGlyphs">EPL_EES.BA0206019</text>
<text x="573.8" y="551.1" font-size="5.2" text-anchor="middle" fill="#078585" stroke="#078585" stroke-width="0.22" textLength="40.2" lengthAdjust="spacingAndGlyphs">Damper actuator,</text>
<text x="573.8" y="557.4" font-size="5.2" text-anchor="middle" fill="#078585" stroke="#078585" stroke-width="0.22" textLength="31.3" lengthAdjust="spacingAndGlyphs">spring return,</text>
<text x="573.8" y="563.7" font-size="5.2" text-anchor="middle" fill="#078585" stroke="#078585" stroke-width="0.22" textLength="26.5" lengthAdjust="spacingAndGlyphs">continuous,</text>
<text x="573.8" y="570.0" font-size="5.2" text-anchor="middle" fill="#078585" stroke="#078585" stroke-width="0.22" textLength="46.9" lengthAdjust="spacingAndGlyphs">currentless CLOSED,</text>
<text x="573.8" y="576.4" font-size="5.2" text-anchor="middle" fill="#078585" stroke="#078585" stroke-width="0.22" textLength="45.3" lengthAdjust="spacingAndGlyphs">RF, 4 Nm, &lt;0,8 m²,</text>
<text x="573.8" y="582.7" font-size="5.2" text-anchor="middle" fill="#078585" stroke="#078585" stroke-width="0.22" textLength="10.4" lengthAdjust="spacingAndGlyphs">24 V</text>
<text x="627.4" y="519.1" font-size="5" font-weight="bold" text-anchor="middle" fill="#000" stroke="#000" stroke-width="0.18">BT3</text>
<text x="627.4" y="525.2" font-size="5.2" text-anchor="middle" fill="#9fb060" stroke="#9fb060" stroke-width="0.08" textLength="54.7" lengthAdjust="spacingAndGlyphs">=SSA01+F1&amp;EFS/102.1</text>
<text x="627.4" y="531.5" font-size="5.2" text-anchor="middle" fill="#078585" stroke="#078585" stroke-width="0.22" textLength="47.6" lengthAdjust="spacingAndGlyphs">EPL_EES.BA0101009</text>
<text x="627.4" y="537.9" font-size="5.2" text-anchor="middle" fill="#078585" stroke="#078585" stroke-width="0.22" textLength="40.5" lengthAdjust="spacingAndGlyphs">Duct temperature</text>
<text x="627.4" y="544.2" font-size="5.2" text-anchor="middle" fill="#078585" stroke="#078585" stroke-width="0.22" textLength="37.0" lengthAdjust="spacingAndGlyphs">sensor, PT1000,</text>
<text x="627.4" y="550.5" font-size="5.2" text-anchor="middle" fill="#078585" stroke="#078585" stroke-width="0.22" textLength="34.9" lengthAdjust="spacingAndGlyphs">length 150 mm</text>
<text x="696" y="544.3" font-size="5" font-weight="bold" text-anchor="end" fill="#000" stroke="#000" stroke-width="0.18">-BT4</text>
<text x="696" y="550.9" font-size="5.2" text-anchor="end" fill="#9fb060" stroke="#9fb060" stroke-width="0.08" textLength="54.7" lengthAdjust="spacingAndGlyphs">=SSA01+F1&amp;EFS/103.1</text>
<text x="696" y="557.2" font-size="5.2" text-anchor="end" fill="#078585" stroke="#078585" stroke-width="0.22" textLength="47.6" lengthAdjust="spacingAndGlyphs">EPL_EES.BA0101002</text>
<text x="696" y="563.6" font-size="5.2" text-anchor="end" fill="#078585" stroke="#078585" stroke-width="0.22" textLength="54.4" lengthAdjust="spacingAndGlyphs">Immersion temperature</text>
<text x="696" y="569.9" font-size="5.2" text-anchor="end" fill="#078585" stroke="#078585" stroke-width="0.22" textLength="53.0" lengthAdjust="spacingAndGlyphs">sensor, PT1000, length</text>
<text x="696" y="576.2" font-size="5.2" text-anchor="end" fill="#078585" stroke="#078585" stroke-width="0.22" textLength="18.9" lengthAdjust="spacingAndGlyphs">150 mm</text>
<text x="696" y="587.7" font-size="5" font-weight="bold" text-anchor="end" fill="#000" stroke="#000" stroke-width="0.18">GP1</text>
<text x="696" y="593.8" font-size="5.2" text-anchor="end" fill="#9fb060" stroke="#9fb060" stroke-width="0.08" textLength="51.8" lengthAdjust="spacingAndGlyphs">=SSA01+F1&amp;EFS/40.1</text>
<text x="696" y="600.1" font-size="5.2" text-anchor="end" fill="#078585" stroke="#078585" stroke-width="0.22" textLength="47.6" lengthAdjust="spacingAndGlyphs">EPL_EES.BA0701043</text>
<text x="696" y="606.5" font-size="5.2" text-anchor="end" fill="#078585" stroke="#078585" stroke-width="0.22" textLength="48.2" lengthAdjust="spacingAndGlyphs">Pump, 1-stage, 230V</text>
<text x="775" y="544.3" font-size="5" font-weight="bold" text-anchor="start" fill="#000" stroke="#000" stroke-width="0.18">-BT5</text>
<text x="774.2" y="550.9" font-size="5.2" text-anchor="start" fill="#9fb060" stroke="#9fb060" stroke-width="0.08" textLength="54.7" lengthAdjust="spacingAndGlyphs">=SSA01+F1&amp;EFS/104.1</text>
<text x="774.2" y="557.2" font-size="5.2" text-anchor="start" fill="#078585" stroke="#078585" stroke-width="0.22" textLength="47.6" lengthAdjust="spacingAndGlyphs">EPL_EES.BA0101002</text>
<text x="774.2" y="563.6" font-size="5.2" text-anchor="start" fill="#078585" stroke="#078585" stroke-width="0.22" textLength="54.4" lengthAdjust="spacingAndGlyphs">Immersion temperature</text>
<text x="774.2" y="569.9" font-size="5.2" text-anchor="start" fill="#078585" stroke="#078585" stroke-width="0.22" textLength="53.0" lengthAdjust="spacingAndGlyphs">sensor, PT1000, length</text>
<text x="774.2" y="576.2" font-size="5.2" text-anchor="start" fill="#078585" stroke="#078585" stroke-width="0.22" textLength="18.9" lengthAdjust="spacingAndGlyphs">150 mm</text>
<text x="827" y="519.1" font-size="5" font-weight="bold" text-anchor="middle" fill="#000" stroke="#000" stroke-width="0.18">FW1</text>
<text x="827" y="525.2" font-size="5.2" text-anchor="middle" fill="#9fb060" stroke="#9fb060" stroke-width="0.08" textLength="54.7" lengthAdjust="spacingAndGlyphs">=SSA01+F1&amp;EFS/150.1</text>
<text x="827" y="531.5" font-size="5.2" text-anchor="middle" fill="#078585" stroke="#078585" stroke-width="0.22" textLength="47.6" lengthAdjust="spacingAndGlyphs">EPL_EES.BA0111010</text>
<text x="827" y="537.9" font-size="5.2" text-anchor="middle" fill="#078585" stroke="#078585" stroke-width="0.22" textLength="36.2" lengthAdjust="spacingAndGlyphs">Frost protection</text>
<text x="827" y="544.2" font-size="5.2" text-anchor="middle" fill="#078585" stroke="#078585" stroke-width="0.22" textLength="45.1" lengthAdjust="spacingAndGlyphs">limiter, 6m capillary</text>
<text x="827" y="550.5" font-size="5.2" text-anchor="middle" fill="#078585" stroke="#078585" stroke-width="0.22" textLength="26.8" lengthAdjust="spacingAndGlyphs">tube sensor</text>
<text x="879.6" y="519.1" font-size="5" font-weight="bold" text-anchor="middle" fill="#000" stroke="#000" stroke-width="0.18">BT6</text>
<text x="879.6" y="525.2" font-size="5.2" text-anchor="middle" fill="#9fb060" stroke="#9fb060" stroke-width="0.08" textLength="54.7" lengthAdjust="spacingAndGlyphs">=SSA01+F1&amp;EFS/105.1</text>
<text x="879.6" y="531.5" font-size="5.2" text-anchor="middle" fill="#078585" stroke="#078585" stroke-width="0.22" textLength="47.6" lengthAdjust="spacingAndGlyphs">EPL_EES.BA0101009</text>
<text x="879.6" y="537.9" font-size="5.2" text-anchor="middle" fill="#078585" stroke="#078585" stroke-width="0.22" textLength="40.5" lengthAdjust="spacingAndGlyphs">Duct temperature</text>
<text x="879.6" y="544.2" font-size="5.2" text-anchor="middle" fill="#078585" stroke="#078585" stroke-width="0.22" textLength="37.0" lengthAdjust="spacingAndGlyphs">sensor, PT1000,</text>
<text x="879.6" y="550.5" font-size="5.2" text-anchor="middle" fill="#078585" stroke="#078585" stroke-width="0.22" textLength="34.9" lengthAdjust="spacingAndGlyphs">length 150 mm</text>
<text x="937.6" y="544.3" font-size="5" font-weight="bold" text-anchor="end" fill="#000" stroke="#000" stroke-width="0.18">-BT7</text>
<text x="937.6" y="550.9" font-size="5.2" text-anchor="end" fill="#9fb060" stroke="#9fb060" stroke-width="0.08" textLength="54.7" lengthAdjust="spacingAndGlyphs">=SSA01+F1&amp;EFS/106.1</text>
<text x="937.6" y="557.2" font-size="5.2" text-anchor="end" fill="#078585" stroke="#078585" stroke-width="0.22" textLength="47.6" lengthAdjust="spacingAndGlyphs">EPL_EES.BA0101002</text>
<text x="937.6" y="563.6" font-size="5.2" text-anchor="end" fill="#078585" stroke="#078585" stroke-width="0.22" textLength="54.4" lengthAdjust="spacingAndGlyphs">Immersion temperature</text>
<text x="937.6" y="569.9" font-size="5.2" text-anchor="end" fill="#078585" stroke="#078585" stroke-width="0.22" textLength="53.0" lengthAdjust="spacingAndGlyphs">sensor, PT1000, length</text>
<text x="937.6" y="576.2" font-size="5.2" text-anchor="end" fill="#078585" stroke="#078585" stroke-width="0.22" textLength="18.9" lengthAdjust="spacingAndGlyphs">150 mm</text>
<text x="1017" y="544.7" font-size="5" font-weight="bold" text-anchor="start" fill="#000" stroke="#000" stroke-width="0.18">-BT8</text>
<text x="1016.2" y="551.1" font-size="5.2" text-anchor="start" fill="#9fb060" stroke="#9fb060" stroke-width="0.08" textLength="54.7" lengthAdjust="spacingAndGlyphs">=SSA01+F1&amp;EFS/107.1</text>
<text x="1016.2" y="557.4" font-size="5.2" text-anchor="start" fill="#078585" stroke="#078585" stroke-width="0.22" textLength="47.6" lengthAdjust="spacingAndGlyphs">EPL_EES.BA0101002</text>
<text x="1016.2" y="563.8" font-size="5.2" text-anchor="start" fill="#078585" stroke="#078585" stroke-width="0.22" textLength="54.4" lengthAdjust="spacingAndGlyphs">Immersion temperature</text>
<text x="1016.2" y="570.1" font-size="5.2" text-anchor="start" fill="#078585" stroke="#078585" stroke-width="0.22" textLength="53.0" lengthAdjust="spacingAndGlyphs">sensor, PT1000, length</text>
<text x="1016.2" y="576.4" font-size="5.2" text-anchor="start" fill="#078585" stroke="#078585" stroke-width="0.22" textLength="18.9" lengthAdjust="spacingAndGlyphs">150 mm</text>
<text x="1064.6" y="518.9" font-size="5" font-weight="bold" text-anchor="middle" fill="#000" stroke="#000" stroke-width="0.18">BT9</text>
<text x="1064.6" y="525.2" font-size="5.2" text-anchor="middle" fill="#9fb060" stroke="#9fb060" stroke-width="0.08" textLength="54.7" lengthAdjust="spacingAndGlyphs">=SSA01+F1&amp;EFS/108.1</text>
<text x="1064.6" y="531.5" font-size="5.2" text-anchor="middle" fill="#078585" stroke="#078585" stroke-width="0.22" textLength="47.6" lengthAdjust="spacingAndGlyphs">EPL_EES.BA0101009</text>
<text x="1064.6" y="537.9" font-size="5.2" text-anchor="middle" fill="#078585" stroke="#078585" stroke-width="0.22" textLength="40.5" lengthAdjust="spacingAndGlyphs">Duct temperature</text>
<text x="1064.6" y="544.2" font-size="5.2" text-anchor="middle" fill="#078585" stroke="#078585" stroke-width="0.22" textLength="37.0" lengthAdjust="spacingAndGlyphs">sensor, PT1000,</text>
<text x="1064.6" y="550.5" font-size="5.2" text-anchor="middle" fill="#078585" stroke="#078585" stroke-width="0.22" textLength="34.9" lengthAdjust="spacingAndGlyphs">length 150 mm</text>
<text x="771.3" y="629.9" font-size="5" font-weight="bold" text-anchor="start" fill="#000" stroke="#000" stroke-width="0.18">-QN4</text>
<text x="771.3" y="636.1" font-size="5.2" text-anchor="start" fill="#9fb060" stroke="#9fb060" stroke-width="0.08" textLength="54.7" lengthAdjust="spacingAndGlyphs">=SSA01+F1&amp;EFS/220.1</text>
<text x="771.3" y="642.6" font-size="5.2" text-anchor="start" fill="#078585" stroke="#078585" stroke-width="0.22" textLength="47.6" lengthAdjust="spacingAndGlyphs">EPL_EES.BA0202004</text>
<text x="771.3" y="649.0" font-size="5.2" text-anchor="start" fill="#078585" stroke="#078585" stroke-width="0.22" textLength="57.0" lengthAdjust="spacingAndGlyphs">Valve + actuator, 2-way,</text>
<text x="771.3" y="655.5" font-size="5.2" text-anchor="start" fill="#078585" stroke="#078585" stroke-width="0.22" textLength="57.1" lengthAdjust="spacingAndGlyphs">modulating, DN15, R1/2,</text>
<text x="771.3" y="661.9" font-size="5.2" text-anchor="start" fill="#078585" stroke="#078585" stroke-width="0.22" textLength="21.2" lengthAdjust="spacingAndGlyphs">PN16, RF</text>
<text x="1012.8" y="604.2" font-size="5" font-weight="bold" text-anchor="start" fill="#000" stroke="#000" stroke-width="0.18">-QN5</text>
<text x="1012.8" y="610.2" font-size="5.2" text-anchor="start" fill="#9fb060" stroke="#9fb060" stroke-width="0.08" textLength="54.7" lengthAdjust="spacingAndGlyphs">=SSA01+F1&amp;EFS/221.1</text>
<text x="1012.8" y="616.6" font-size="5.2" text-anchor="start" fill="#078585" stroke="#078585" stroke-width="0.22" textLength="47.6" lengthAdjust="spacingAndGlyphs">EPL_EES.BA0202004</text>
<text x="1012.8" y="623.0" font-size="5.2" text-anchor="start" fill="#078585" stroke="#078585" stroke-width="0.22" textLength="57.0" lengthAdjust="spacingAndGlyphs">Valve + actuator, 2-way,</text>
<text x="1012.8" y="629.4" font-size="5.2" text-anchor="start" fill="#078585" stroke="#078585" stroke-width="0.22" textLength="57.1" lengthAdjust="spacingAndGlyphs">modulating, DN15, R1/2,</text>
<text x="1012.8" y="635.8" font-size="5.2" text-anchor="start" fill="#078585" stroke="#078585" stroke-width="0.22" textLength="21.2" lengthAdjust="spacingAndGlyphs">PN16, RF</text>
<text x="1016" y="280.7" font-size="5" font-weight="normal" text-anchor="end" fill="#333" stroke="#333" stroke-width="0">-BV1</text>
<text x="1016" y="287.2" font-size="5.2" text-anchor="end" fill="#9fb060" stroke="#9fb060" stroke-width="0.08" textLength="54.7" lengthAdjust="spacingAndGlyphs">=SSA01+F1&amp;EFS/132.1</text>
<text x="1016" y="293.6" font-size="5.2" text-anchor="end" fill="#078585" stroke="#078585" stroke-width="0.22" textLength="47.6" lengthAdjust="spacingAndGlyphs">EPL_EES.BA0103008</text>
<text x="1016" y="300.1" font-size="5.2" text-anchor="end" fill="#078585" stroke="#078585" stroke-width="0.22" textLength="49.3" lengthAdjust="spacingAndGlyphs">Pressure Transmitter,</text>
<text x="1016" y="306.6" font-size="5.2" text-anchor="end" fill="#078585" stroke="#078585" stroke-width="0.22" textLength="38.4" lengthAdjust="spacingAndGlyphs">0 - 2000 Pa, non</text>
<text x="1016" y="313.0" font-size="5.2" text-anchor="end" fill="#078585" stroke="#078585" stroke-width="0.22" textLength="47.8" lengthAdjust="spacingAndGlyphs">aggressive gases, air</text>
<text x="1036" y="350.9" font-size="5" font-weight="bold" text-anchor="end" fill="#000" stroke="#000" stroke-width="0.18">MA1</text>
<text x="1036" y="357.2" font-size="5.2" text-anchor="end" fill="#9fb060" stroke="#9fb060" stroke-width="0.08" textLength="51.8" lengthAdjust="spacingAndGlyphs">=SSA01+F1&amp;EFS/30.1</text>
<text x="1036" y="363.6" font-size="5.2" text-anchor="end" fill="#078585" stroke="#078585" stroke-width="0.22" textLength="50.4" lengthAdjust="spacingAndGlyphs">EPL_EES.BA07010342</text>
<text x="1036" y="370.0" font-size="5.2" text-anchor="end" fill="#078585" stroke="#078585" stroke-width="0.22" textLength="50.9" lengthAdjust="spacingAndGlyphs">Fan, EC motor, 400 V,</text>
<text x="1036" y="376.4" font-size="5.2" text-anchor="end" fill="#078585" stroke="#078585" stroke-width="0.22" textLength="27.0" lengthAdjust="spacingAndGlyphs">1,1 kW, 3 A</text>
<text x="1048.6" y="386.1" font-size="5" font-weight="normal" text-anchor="end" fill="#333" stroke="#333" stroke-width="0">QB1</text>
<text x="1048.6" y="392.6" font-size="5.2" text-anchor="end" fill="#9fb060" stroke="#9fb060" stroke-width="0.08" textLength="51.8" lengthAdjust="spacingAndGlyphs">=SSA01+F1&amp;EFS/30.0</text>
<text x="1048.6" y="398.9" font-size="5.2" text-anchor="end" fill="#078585" stroke="#078585" stroke-width="0.22" textLength="47.6" lengthAdjust="spacingAndGlyphs">EPL_EES.BA0208001</text>
<text x="1048.6" y="405.3" font-size="5.2" text-anchor="end" fill="#078585" stroke="#078585" stroke-width="0.22" textLength="49.6" lengthAdjust="spacingAndGlyphs">Repair switch, control</text>
<text x="1048.6" y="411.6" font-size="5.2" text-anchor="end" fill="#078585" stroke="#078585" stroke-width="0.22" textLength="9.1" lengthAdjust="spacingAndGlyphs">side</text>
<text x="1132.9" y="349.9" font-size="5" font-weight="bold" text-anchor="middle" fill="#000" stroke="#000" stroke-width="0.18">BP2</text>
<text x="1132.9" y="356.1" font-size="5.2" text-anchor="middle" fill="#9fb060" stroke="#9fb060" stroke-width="0.08" textLength="54.7" lengthAdjust="spacingAndGlyphs">=SSA01+F1&amp;EFS/120.1</text>
<text x="1132.9" y="362.4" font-size="5.2" text-anchor="middle" fill="#078585" stroke="#078585" stroke-width="0.22" textLength="47.6" lengthAdjust="spacingAndGlyphs">EPL_EES.BA0103008</text>
<text x="1132.9" y="368.8" font-size="5.2" text-anchor="middle" fill="#078585" stroke="#078585" stroke-width="0.22" textLength="49.3" lengthAdjust="spacingAndGlyphs">Pressure Transmitter,</text>
<text x="1132.9" y="375.1" font-size="5.2" text-anchor="middle" fill="#078585" stroke="#078585" stroke-width="0.22" textLength="38.4" lengthAdjust="spacingAndGlyphs">0 - 2000 Pa, non</text>
<text x="1132.9" y="381.4" font-size="5.2" text-anchor="middle" fill="#078585" stroke="#078585" stroke-width="0.22" textLength="47.8" lengthAdjust="spacingAndGlyphs">aggressive gases, air</text>
<text x="1136.5" y="450.3" font-size="5" font-weight="normal" text-anchor="end" fill="#333" stroke="#333" stroke-width="0">-BV2</text>
<text x="1136.5" y="457.2" font-size="5.2" text-anchor="end" fill="#9fb060" stroke="#9fb060" stroke-width="0.08" textLength="54.7" lengthAdjust="spacingAndGlyphs">=SSA01+F1&amp;EFS/134.1</text>
<text x="1136.5" y="463.6" font-size="5.2" text-anchor="end" fill="#078585" stroke="#078585" stroke-width="0.22" textLength="47.6" lengthAdjust="spacingAndGlyphs">EPL_EES.BA0103008</text>
<text x="1136.5" y="470.1" font-size="5.2" text-anchor="end" fill="#078585" stroke="#078585" stroke-width="0.22" textLength="49.3" lengthAdjust="spacingAndGlyphs">Pressure Transmitter,</text>
<text x="1136.5" y="476.6" font-size="5.2" text-anchor="end" fill="#078585" stroke="#078585" stroke-width="0.22" textLength="38.4" lengthAdjust="spacingAndGlyphs">0 - 2000 Pa, non</text>
<text x="1136.5" y="483.0" font-size="5.2" text-anchor="end" fill="#078585" stroke="#078585" stroke-width="0.22" textLength="47.8" lengthAdjust="spacingAndGlyphs">aggressive gases, air</text>
<text x="1156" y="521.9" font-size="5" font-weight="bold" text-anchor="end" fill="#000" stroke="#000" stroke-width="0.18">MA2</text>
<text x="1156" y="528.5" font-size="5.2" text-anchor="end" fill="#9fb060" stroke="#9fb060" stroke-width="0.08" textLength="51.8" lengthAdjust="spacingAndGlyphs">=SSA01+F1&amp;EFS/31.1</text>
<text x="1156" y="534.9" font-size="5.2" text-anchor="end" fill="#078585" stroke="#078585" stroke-width="0.22" textLength="50.4" lengthAdjust="spacingAndGlyphs">EPL_EES.BA07010342</text>
<text x="1156" y="541.3" font-size="5.2" text-anchor="end" fill="#078585" stroke="#078585" stroke-width="0.22" textLength="50.9" lengthAdjust="spacingAndGlyphs">Fan, EC motor, 400 V,</text>
<text x="1156" y="547.7" font-size="5.2" text-anchor="end" fill="#078585" stroke="#078585" stroke-width="0.22" textLength="27.0" lengthAdjust="spacingAndGlyphs">1,1 kW, 3 A</text>
<text x="1170" y="565.2" font-size="5.2" text-anchor="end" fill="#9fb060" stroke="#9fb060" stroke-width="0.08" textLength="51.8" lengthAdjust="spacingAndGlyphs">=SSA01+F1&amp;EFS/31.0</text>
<text x="1170" y="571.8" font-size="5.2" text-anchor="end" fill="#078585" stroke="#078585" stroke-width="0.22" textLength="47.6" lengthAdjust="spacingAndGlyphs">EPL_EES.BA0208001</text>
<text x="1170" y="578.4" font-size="5.2" text-anchor="end" fill="#078585" stroke="#078585" stroke-width="0.22" textLength="49.6" lengthAdjust="spacingAndGlyphs">Repair switch, control</text>
<g stroke="#111" stroke-width="1.400" fill="none"><path d="M317.800 667H370.300M343.500 667V716M370.300 667V716"/></g>
<text transform="translate(333.500 711) rotate(-90)" font-size="5.600" font-weight="bold" text-anchor="end" fill="#111">Functions</text><text transform="translate(359 681) rotate(-90)" font-size="5.600" font-weight="bold" text-anchor="end" fill="#111">Benutzeradressschlüssel</text>
<path d="M370.30 716V667.300l6.41-3.800 6.41 3.800V716" fill="#dcdcdc" stroke="#1a1a1a" stroke-width="1.250"/>
<text transform="translate(378.70 674.500) rotate(-90)" font-size="5.500" font-weight="bold" text-anchor="end" fill="#111" textLength="61.3" lengthAdjust="spacingAndGlyphs">RLT01_I1_ABL_ABV 01</text>
<path d="M383.11 716V667.300H393.06V716" fill="#fff" stroke="#1a1a1a" stroke-width="1.250"/>
<text transform="translate(389.79 674.500) rotate(-90)" font-size="4.800" text-anchor="end" fill="#6a6a6a" stroke="#6a6a6a" stroke-width=".12" textLength="65.2" lengthAdjust="spacingAndGlyphs">RLT01_I1_ABL_ABV 01_FR_ 01</text>
<path d="M393.06 716V667.300H403.01V716" fill="#fff" stroke="#1a1a1a" stroke-width="1.250"/>
<text transform="translate(399.74 674.500) rotate(-90)" font-size="4.800" text-anchor="end" fill="#6a6a6a" stroke="#6a6a6a" stroke-width=".12" textLength="66.2" lengthAdjust="spacingAndGlyphs">RLT01_I1_ABL_ABV 01_BM_ 01</text>
<path d="M403.01 716V667.300H412.96V716" fill="#fff" stroke="#1a1a1a" stroke-width="1.250"/>
<text transform="translate(409.69 674.500) rotate(-90)" font-size="4.800" text-anchor="end" fill="#6a6a6a" stroke="#6a6a6a" stroke-width=".12" textLength="66.1" lengthAdjust="spacingAndGlyphs">RLT01_I1_ABL_ABV 01_SM_ 01</text>
<path d="M412.96 716V667.300H422.91V716" fill="#fff" stroke="#1a1a1a" stroke-width="1.250"/>
<text transform="translate(419.63 674.500) rotate(-90)" font-size="4.800" text-anchor="end" fill="#6a6a6a" stroke="#6a6a6a" stroke-width=".12" textLength="65.2" lengthAdjust="spacingAndGlyphs">RLT01_I1_ABL_ABV 01_ST_ 01</text>
<path d="M422.91 716V667.300H432.86V716" fill="#fff" stroke="#1a1a1a" stroke-width="1.250"/>
<text transform="translate(429.58 674.500) rotate(-90)" font-size="4.800" text-anchor="end" fill="#6a6a6a" stroke="#6a6a6a" stroke-width=".12" textLength="66.6" lengthAdjust="spacingAndGlyphs">RLT01_I1_ABL_ABV 01_HM_ 01</text>
<path d="M432.86 716V667.300l6.41-3.800 6.41 3.800V716" fill="#dcdcdc" stroke="#1a1a1a" stroke-width="1.250"/>
<text transform="translate(441.26 674.500) rotate(-90)" font-size="5.500" font-weight="bold" text-anchor="end" fill="#111" textLength="62.0" lengthAdjust="spacingAndGlyphs">RLT01_I1_ANL_ANS 01</text>
<path d="M445.67 716V667.300H455.62V716" fill="#fff" stroke="#1a1a1a" stroke-width="1.250"/>
<text transform="translate(452.34 674.500) rotate(-90)" font-size="4.800" text-anchor="end" fill="#6a6a6a" stroke="#6a6a6a" stroke-width=".12" textLength="66.9" lengthAdjust="spacingAndGlyphs">RLT01_I1_ANL_ANS 01_RM_ 01</text>
<path d="M455.62 716V667.300H465.57V716" fill="#fff" stroke="#1a1a1a" stroke-width="1.250"/>
<text transform="translate(462.29 674.500) rotate(-90)" font-size="4.800" text-anchor="end" fill="#6a6a6a" stroke="#6a6a6a" stroke-width=".12" textLength="73.5" lengthAdjust="spacingAndGlyphs">RLT01_I1_ANL_ANS 01_RM_ 02 01</text>
<path d="M465.57 716V667.300H475.52V716" fill="#fff" stroke="#1a1a1a" stroke-width="1.250"/>
<text transform="translate(472.24 674.500) rotate(-90)" font-size="4.800" text-anchor="end" fill="#6a6a6a" stroke="#6a6a6a" stroke-width=".12" textLength="73.5" lengthAdjust="spacingAndGlyphs">RLT01_I1_ANL_ANS 01_RM_ 03 01</text>
<path d="M475.52 716V667.300l6.41-3.800 6.41 3.800V716" fill="#dcdcdc" stroke="#1a1a1a" stroke-width="1.250"/>
<text transform="translate(483.92 674.500) rotate(-90)" font-size="5.500" font-weight="bold" text-anchor="end" fill="#111" textLength="62.8" lengthAdjust="spacingAndGlyphs">RLT01_I1_ANL_BMA 01</text>
<path d="M488.33 716V667.300H498.28V716" fill="#fff" stroke="#1a1a1a" stroke-width="1.250"/>
<text transform="translate(495.00 674.500) rotate(-90)" font-size="4.800" text-anchor="end" fill="#6a6a6a" stroke="#6a6a6a" stroke-width=".12" textLength="67.4" lengthAdjust="spacingAndGlyphs">RLT01_I1_ANL_BMA 01_BM_ 01</text>
<path d="M498.28 716V667.300l6.41-3.800 6.41 3.800V716" fill="#dcdcdc" stroke="#1a1a1a" stroke-width="1.250"/>
<text transform="translate(506.68 674.500) rotate(-90)" font-size="5.500" font-weight="bold" text-anchor="end" fill="#111" textLength="61.0" lengthAdjust="spacingAndGlyphs">RLT01_I1_ABL_BSK 01</text>
<path d="M511.09 716V667.300H521.04V716" fill="#fff" stroke="#1a1a1a" stroke-width="1.250"/>
<text transform="translate(517.76 674.500) rotate(-90)" font-size="4.800" text-anchor="end" fill="#6a6a6a" stroke="#6a6a6a" stroke-width=".12" textLength="66.0" lengthAdjust="spacingAndGlyphs">RLT01_I1_ABL_BSK 01_BM_ 01</text>
<path d="M521.04 716V667.300l6.41-3.800 6.41 3.800V716" fill="#dcdcdc" stroke="#1a1a1a" stroke-width="1.250"/>
<text transform="translate(529.44 674.500) rotate(-90)" font-size="5.500" font-weight="bold" text-anchor="end" fill="#111" textLength="61.1" lengthAdjust="spacingAndGlyphs">RLT01_I1_ZUL_BSK 02</text>
<path d="M533.85 716V667.300H543.80V716" fill="#fff" stroke="#1a1a1a" stroke-width="1.250"/>
<text transform="translate(540.52 674.500) rotate(-90)" font-size="4.800" text-anchor="end" fill="#6a6a6a" stroke="#6a6a6a" stroke-width=".12" textLength="66.1" lengthAdjust="spacingAndGlyphs">RLT01_I1_ZUL_BSK 02_BM_ 01</text>
<path d="M543.80 716V667.300l6.41-3.800 6.41 3.800V716" fill="#dcdcdc" stroke="#1a1a1a" stroke-width="1.250"/>
<text transform="translate(552.20 674.500) rotate(-90)" font-size="5.500" font-weight="bold" text-anchor="end" fill="#111" textLength="63.0" lengthAdjust="spacingAndGlyphs">RLT01_I1_RAU_BTQ 01</text>
<path d="M556.61 716V667.300H566.56V716" fill="#fff" stroke="#1a1a1a" stroke-width="1.250"/>
<text transform="translate(563.28 674.500) rotate(-90)" font-size="4.800" text-anchor="end" fill="#6a6a6a" stroke="#6a6a6a" stroke-width=".12" textLength="69.2" lengthAdjust="spacingAndGlyphs">RLT01_I1_RAU_BTQ 01_MWT 01</text>
<path d="M566.56 716V667.300H576.51V716" fill="#fff" stroke="#1a1a1a" stroke-width="1.250"/>
<text transform="translate(573.24 674.500) rotate(-90)" font-size="4.800" text-anchor="end" fill="#6a6a6a" stroke="#6a6a6a" stroke-width=".12" textLength="67.3" lengthAdjust="spacingAndGlyphs">RLT01_I1_RAU_BTQ 01_CO2 01</text>
<path d="M576.51 716V667.300l6.41-3.800 6.41 3.800V716" fill="#dcdcdc" stroke="#1a1a1a" stroke-width="1.250"/>
<text transform="translate(584.91 674.500) rotate(-90)" font-size="5.500" font-weight="bold" text-anchor="end" fill="#111" textLength="64.8" lengthAdjust="spacingAndGlyphs">RLT01_I1_WLH_FSW 01</text>
<path d="M589.32 716V667.300H599.27V716" fill="#fff" stroke="#1a1a1a" stroke-width="1.250"/>
<text transform="translate(596.00 674.500) rotate(-90)" font-size="4.800" text-anchor="end" fill="#6a6a6a" stroke="#6a6a6a" stroke-width=".12" textLength="68.8" lengthAdjust="spacingAndGlyphs">RLT01_I1_WLH_FSW 01_SM_ 01</text>
<path d="M599.27 716V667.300l6.41-3.800 6.41 3.800V716" fill="#dcdcdc" stroke="#1a1a1a" stroke-width="1.250"/>
<text transform="translate(607.67 674.500) rotate(-90)" font-size="5.500" font-weight="bold" text-anchor="end" fill="#111" textLength="59.3" lengthAdjust="spacingAndGlyphs">RLT01_I1_AUL_LFI 01</text>
<path d="M612.08 716V667.300H622.03V716" fill="#fff" stroke="#1a1a1a" stroke-width="1.250"/>
<text transform="translate(618.75 674.500) rotate(-90)" font-size="4.800" text-anchor="end" fill="#6a6a6a" stroke="#6a6a6a" stroke-width=".12" textLength="66.1" lengthAdjust="spacingAndGlyphs">RLT01_I1_AUL_LFI 01_WM_ 01</text>
<path d="M622.03 716V667.300l6.41-3.800 6.41 3.800V716" fill="#dcdcdc" stroke="#1a1a1a" stroke-width="1.250"/>
<text transform="translate(630.43 674.500) rotate(-90)" font-size="5.500" font-weight="bold" text-anchor="end" fill="#111" textLength="58.9" lengthAdjust="spacingAndGlyphs">RLT01_I1_ABL_LFI 02</text>
<path d="M634.84 716V667.300H644.79V716" fill="#fff" stroke="#1a1a1a" stroke-width="1.250"/>
<text transform="translate(641.51 674.500) rotate(-90)" font-size="4.800" text-anchor="end" fill="#6a6a6a" stroke="#6a6a6a" stroke-width=".12" textLength="65.8" lengthAdjust="spacingAndGlyphs">RLT01_I1_ABL_LFI 02_WM_ 01</text>
<path d="M644.79 716V667.300l6.41-3.800 6.41 3.800V716" fill="#dcdcdc" stroke="#1a1a1a" stroke-width="1.250"/>
<text transform="translate(653.19 674.500) rotate(-90)" font-size="5.500" font-weight="bold" text-anchor="end" fill="#111" textLength="59.1" lengthAdjust="spacingAndGlyphs">RLT01_I1_ZUL_LFI 03</text>
<path d="M657.60 716V667.300H667.55V716" fill="#fff" stroke="#1a1a1a" stroke-width="1.250"/>
<text transform="translate(664.27 674.500) rotate(-90)" font-size="4.800" text-anchor="end" fill="#6a6a6a" stroke="#6a6a6a" stroke-width=".12" textLength="66.0" lengthAdjust="spacingAndGlyphs">RLT01_I1_ZUL_LFI 03_WM_ 01</text>
<path d="M667.55 716V667.300l6.41-3.800 6.41 3.800V716" fill="#dcdcdc" stroke="#1a1a1a" stroke-width="1.250"/>
<text transform="translate(675.95 674.500) rotate(-90)" font-size="5.500" font-weight="bold" text-anchor="end" fill="#111" textLength="60.9" lengthAdjust="spacingAndGlyphs">RLT01_I1_FOL_LKA 01</text>
<path d="M680.36 716V667.300H690.31V716" fill="#fff" stroke="#1a1a1a" stroke-width="1.250"/>
<text transform="translate(687.03 674.500) rotate(-90)" font-size="4.800" text-anchor="end" fill="#6a6a6a" stroke="#6a6a6a" stroke-width=".12" textLength="64.9" lengthAdjust="spacingAndGlyphs">RLT01_I1_FOL_LKA 01_SB_ 01</text>
<path d="M690.31 716V667.300H700.26V716" fill="#fff" stroke="#1a1a1a" stroke-width="1.250"/>
<text transform="translate(696.99 674.500) rotate(-90)" font-size="4.800" text-anchor="end" fill="#6a6a6a" stroke="#6a6a6a" stroke-width=".12" textLength="65.9" lengthAdjust="spacingAndGlyphs">RLT01_I1_FOL_LKA 01_BM_ 01</text>
<path d="M700.26 716V667.300H710.21V716" fill="#fff" stroke="#1a1a1a" stroke-width="1.250"/>
<text transform="translate(706.94 674.500) rotate(-90)" font-size="4.800" text-anchor="end" fill="#6a6a6a" stroke="#6a6a6a" stroke-width=".12" textLength="66.3" lengthAdjust="spacingAndGlyphs">RLT01_I1_FOL_LKA 01_RMA 01</text>
<path d="M710.21 716V667.300H720.16V716" fill="#fff" stroke="#1a1a1a" stroke-width="1.250"/>
<text transform="translate(716.89 674.500) rotate(-90)" font-size="4.800" text-anchor="end" fill="#6a6a6a" stroke="#6a6a6a" stroke-width=".12" textLength="66.3" lengthAdjust="spacingAndGlyphs">RLT01_I1_FOL_LKA 01_HM_ 01</text>
<path d="M720.16 716V667.300l6.41-3.800 6.41 3.800V716" fill="#dcdcdc" stroke="#1a1a1a" stroke-width="1.250"/>
<text transform="translate(728.57 674.500) rotate(-90)" font-size="5.500" font-weight="bold" text-anchor="end" fill="#111" textLength="61.1" lengthAdjust="spacingAndGlyphs">RLT01_I1_AUL_LKA 02</text>
<path d="M732.97 716V667.300H742.92V716" fill="#fff" stroke="#1a1a1a" stroke-width="1.250"/>
<text transform="translate(739.65 674.500) rotate(-90)" font-size="4.800" text-anchor="end" fill="#6a6a6a" stroke="#6a6a6a" stroke-width=".12" textLength="65.0" lengthAdjust="spacingAndGlyphs">RLT01_I1_AUL_LKA 02_SB_ 01</text>
<path d="M742.92 716V667.300H752.87V716" fill="#fff" stroke="#1a1a1a" stroke-width="1.250"/>
<text transform="translate(749.60 674.500) rotate(-90)" font-size="4.800" text-anchor="end" fill="#6a6a6a" stroke="#6a6a6a" stroke-width=".12" textLength="66.1" lengthAdjust="spacingAndGlyphs">RLT01_I1_AUL_LKA 02_BM_ 01</text>
<path d="M752.87 716V667.300H762.82V716" fill="#fff" stroke="#1a1a1a" stroke-width="1.250"/>
<text transform="translate(759.55 674.500) rotate(-90)" font-size="4.800" text-anchor="end" fill="#6a6a6a" stroke="#6a6a6a" stroke-width=".12" textLength="66.5" lengthAdjust="spacingAndGlyphs">RLT01_I1_AUL_LKA 02_RMA 01</text>
<path d="M762.82 716V667.300H772.77V716" fill="#fff" stroke="#1a1a1a" stroke-width="1.250"/>
<text transform="translate(769.50 674.500) rotate(-90)" font-size="4.800" text-anchor="end" fill="#6a6a6a" stroke="#6a6a6a" stroke-width=".12" textLength="66.5" lengthAdjust="spacingAndGlyphs">RLT01_I1_AUL_LKA 02_HM_ 01</text>
<path d="M772.77 716V667.300l6.41-3.800 6.41 3.800V716" fill="#dcdcdc" stroke="#1a1a1a" stroke-width="1.250"/>
<text transform="translate(781.18 674.500) rotate(-90)" font-size="5.500" font-weight="bold" text-anchor="end" fill="#111" textLength="63.7" lengthAdjust="spacingAndGlyphs">RLT01_I1_WRG_LKA 03</text>
<path d="M785.58 716V667.300H795.53V716" fill="#fff" stroke="#1a1a1a" stroke-width="1.250"/>
<text transform="translate(792.26 674.500) rotate(-90)" font-size="4.800" text-anchor="end" fill="#6a6a6a" stroke="#6a6a6a" stroke-width=".12" textLength="67.1" lengthAdjust="spacingAndGlyphs">RLT01_I1_WRG_LKA 03_ST_ 01</text>
<path d="M795.53 716V667.300H805.48V716" fill="#fff" stroke="#1a1a1a" stroke-width="1.250"/>
<text transform="translate(802.21 674.500) rotate(-90)" font-size="4.800" text-anchor="end" fill="#6a6a6a" stroke="#6a6a6a" stroke-width=".12" textLength="67.2" lengthAdjust="spacingAndGlyphs">RLT01_I1_WRG_LKA 03_RP_ 01</text>
<path d="M805.48 716V667.300H815.43V716" fill="#fff" stroke="#1a1a1a" stroke-width="1.250"/>
<text transform="translate(812.16 674.500) rotate(-90)" font-size="4.800" text-anchor="end" fill="#6a6a6a" stroke="#6a6a6a" stroke-width=".12" textLength="68.5" lengthAdjust="spacingAndGlyphs">RLT01_I1_WRG_LKA 03_HM_ 01</text>
<path d="M815.43 716V667.300l6.41-3.800 6.41 3.800V716" fill="#dcdcdc" stroke="#1a1a1a" stroke-width="1.250"/>
<text transform="translate(823.84 674.500) rotate(-90)" font-size="5.500" font-weight="bold" text-anchor="end" fill="#111" textLength="61.0" lengthAdjust="spacingAndGlyphs">RLT01_I1_ABL_PAB 01</text>
<path d="M828.24 716V667.300H838.19V716" fill="#fff" stroke="#1a1a1a" stroke-width="1.250"/>
<text transform="translate(834.92 674.500) rotate(-90)" font-size="4.800" text-anchor="end" fill="#6a6a6a" stroke="#6a6a6a" stroke-width=".12" textLength="67.5" lengthAdjust="spacingAndGlyphs">RLT01_I1_ABL_PAB 01_MWP 01</text>
<path d="M838.19 716V667.300l6.41-3.800 6.41 3.800V716" fill="#dcdcdc" stroke="#1a1a1a" stroke-width="1.250"/>
<text transform="translate(846.60 674.500) rotate(-90)" font-size="5.500" font-weight="bold" text-anchor="end" fill="#111" textLength="62.9" lengthAdjust="spacingAndGlyphs">RLT01_I1_WLH_PPE 01</text>
<path d="M851.00 716V667.300H860.95V716" fill="#fff" stroke="#1a1a1a" stroke-width="1.250"/>
<text transform="translate(857.68 674.500) rotate(-90)" font-size="4.800" text-anchor="end" fill="#6a6a6a" stroke="#6a6a6a" stroke-width=".12" textLength="66.4" lengthAdjust="spacingAndGlyphs">RLT01_I1_WLH_PPE 01_SB_ 01</text>
<path d="M860.95 716V667.300H870.90V716" fill="#fff" stroke="#1a1a1a" stroke-width="1.250"/>
<text transform="translate(867.63 674.500) rotate(-90)" font-size="4.800" text-anchor="end" fill="#6a6a6a" stroke="#6a6a6a" stroke-width=".12" textLength="67.5" lengthAdjust="spacingAndGlyphs">RLT01_I1_WLH_PPE 01_BM_ 01</text>
<path d="M870.90 716V667.300H880.85V716" fill="#fff" stroke="#1a1a1a" stroke-width="1.250"/>
<text transform="translate(877.58 674.500) rotate(-90)" font-size="4.800" text-anchor="end" fill="#6a6a6a" stroke="#6a6a6a" stroke-width=".12" textLength="67.3" lengthAdjust="spacingAndGlyphs">RLT01_I1_WLH_PPE 01_SM_ 01</text>
<path d="M880.85 716V667.300H890.80V716" fill="#fff" stroke="#1a1a1a" stroke-width="1.250"/>
<text transform="translate(887.53 674.500) rotate(-90)" font-size="4.800" text-anchor="end" fill="#6a6a6a" stroke="#6a6a6a" stroke-width=".12" textLength="67.9" lengthAdjust="spacingAndGlyphs">RLT01_I1_WLH_PPE 01_HM_ 01</text>
<path d="M890.80 716V667.300l6.41-3.800 6.41 3.800V716" fill="#dcdcdc" stroke="#1a1a1a" stroke-width="1.250"/>
<text transform="translate(899.21 674.500) rotate(-90)" font-size="5.500" font-weight="bold" text-anchor="end" fill="#111" textLength="61.3" lengthAdjust="spacingAndGlyphs">RLT01_I1_ZUL_PZU 01</text>
<path d="M903.61 716V667.300H913.56V716" fill="#fff" stroke="#1a1a1a" stroke-width="1.250"/>
<text transform="translate(910.29 674.500) rotate(-90)" font-size="4.800" text-anchor="end" fill="#6a6a6a" stroke="#6a6a6a" stroke-width=".12" textLength="67.7" lengthAdjust="spacingAndGlyphs">RLT01_I1_ZUL_PZU 01_MWP 01</text>
<path d="M913.56 716V667.300l6.41-3.800 6.41 3.800V716" fill="#dcdcdc" stroke="#1a1a1a" stroke-width="1.250"/>
<text transform="translate(921.97 674.500) rotate(-90)" font-size="5.500" font-weight="bold" text-anchor="end" fill="#111" textLength="62.5" lengthAdjust="spacingAndGlyphs">RLT01_I1_RAU_RBT 01</text>
<path d="M926.37 716V667.300H936.32V716" fill="#fff" stroke="#1a1a1a" stroke-width="1.250"/>
<text transform="translate(933.05 674.500) rotate(-90)" font-size="4.800" text-anchor="end" fill="#6a6a6a" stroke="#6a6a6a" stroke-width=".12" textLength="67.3" lengthAdjust="spacingAndGlyphs">RLT01_I1_RAU_RBT 01_RM_ 01</text>
<path d="M936.32 716V667.300H946.27V716" fill="#fff" stroke="#1a1a1a" stroke-width="1.250"/>
<text transform="translate(943.00 674.500) rotate(-90)" font-size="4.800" text-anchor="end" fill="#6a6a6a" stroke="#6a6a6a" stroke-width=".12" textLength="67.3" lengthAdjust="spacingAndGlyphs">RLT01_I1_RAU_RBT 01_RM_ 01</text>
<path d="M946.27 716V667.300H956.22V716" fill="#fff" stroke="#1a1a1a" stroke-width="1.250"/>
<text transform="translate(952.95 674.500) rotate(-90)" font-size="4.800" text-anchor="end" fill="#6a6a6a" stroke="#6a6a6a" stroke-width=".12" textLength="66.1" lengthAdjust="spacingAndGlyphs">RLT01_I1_RAU_RBT 01_SPT 01</text>
<path d="M956.22 716V667.300l6.41-3.800 6.41 3.800V716" fill="#dcdcdc" stroke="#1a1a1a" stroke-width="1.250"/>
<text transform="translate(964.63 674.500) rotate(-90)" font-size="5.500" font-weight="bold" text-anchor="end" fill="#111" textLength="61.0" lengthAdjust="spacingAndGlyphs">RLT01_I1_ABL_REP 01</text>
<path d="M969.03 716V667.300H978.98V716" fill="#fff" stroke="#1a1a1a" stroke-width="1.250"/>
<text transform="translate(975.71 674.500) rotate(-90)" font-size="4.800" text-anchor="end" fill="#6a6a6a" stroke="#6a6a6a" stroke-width=".12" textLength="67.4" lengthAdjust="spacingAndGlyphs">RLT01_I1_ABL_REP 01_WM_ 01</text>
<path d="M978.98 716V667.300l6.41-3.800 6.41 3.800V716" fill="#dcdcdc" stroke="#1a1a1a" stroke-width="1.250"/>
<text transform="translate(987.39 674.500) rotate(-90)" font-size="5.500" font-weight="bold" text-anchor="end" fill="#111" textLength="61.1" lengthAdjust="spacingAndGlyphs">RLT01_I1_ZUL_REP 02</text>
<path d="M991.79 716V667.300H1001.74V716" fill="#fff" stroke="#1a1a1a" stroke-width="1.250"/>
<text transform="translate(998.47 674.500) rotate(-90)" font-size="4.800" text-anchor="end" fill="#6a6a6a" stroke="#6a6a6a" stroke-width=".12" textLength="67.6" lengthAdjust="spacingAndGlyphs">RLT01_I1_ZUL_REP 02_WM_ 01</text>
<path d="M1001.74 716V667.300l6.41-3.800 6.41 3.800V716" fill="#dcdcdc" stroke="#1a1a1a" stroke-width="1.250"/>
<text transform="translate(1010.15 674.500) rotate(-90)" font-size="5.500" font-weight="bold" text-anchor="end" fill="#111" textLength="61.7" lengthAdjust="spacingAndGlyphs">RLT01_I1_ABL_RHZ 01</text>
<path d="M1014.55 716V667.300H1024.50V716" fill="#fff" stroke="#1a1a1a" stroke-width="1.250"/>
<text transform="translate(1021.23 674.500) rotate(-90)" font-size="4.800" text-anchor="end" fill="#6a6a6a" stroke="#6a6a6a" stroke-width=".12" textLength="66.4" lengthAdjust="spacingAndGlyphs">RLT01_I1_ABL_RHZ 01_SM_ 01</text>
<path d="M1024.50 716V667.300H1034.45V716" fill="#fff" stroke="#1a1a1a" stroke-width="1.250"/>
<text transform="translate(1031.18 674.500) rotate(-90)" font-size="4.800" text-anchor="end" fill="#6a6a6a" stroke="#6a6a6a" stroke-width=".12" textLength="68.0" lengthAdjust="spacingAndGlyphs">RLT01_I1_ABL_RHZ 01_WM_ 01</text>
<path d="M1034.45 716V667.300l6.41-3.800 6.41 3.800V716" fill="#dcdcdc" stroke="#1a1a1a" stroke-width="1.250"/>
<text transform="translate(1042.86 674.500) rotate(-90)" font-size="5.500" font-weight="bold" text-anchor="end" fill="#111" textLength="61.8" lengthAdjust="spacingAndGlyphs">RLT01_I1_ZUL_RHZ 02</text>
<path d="M1047.26 716V667.300H1057.21V716" fill="#fff" stroke="#1a1a1a" stroke-width="1.250"/>
<text transform="translate(1053.94 674.500) rotate(-90)" font-size="4.800" text-anchor="end" fill="#6a6a6a" stroke="#6a6a6a" stroke-width=".12" textLength="66.5" lengthAdjust="spacingAndGlyphs">RLT01_I1_ZUL_RHZ 02_SM_ 01</text>
<path d="M1057.21 716V667.300H1067.16V716" fill="#fff" stroke="#1a1a1a" stroke-width="1.250"/>
<text transform="translate(1063.89 674.500) rotate(-90)" font-size="4.800" text-anchor="end" fill="#6a6a6a" stroke="#6a6a6a" stroke-width=".12" textLength="68.1" lengthAdjust="spacingAndGlyphs">RLT01_I1_ZUL_RHZ 02_WM_ 01</text>
<path d="M1067.16 716V667.300l6.41-3.800 6.41 3.800V716" fill="#dcdcdc" stroke="#1a1a1a" stroke-width="1.250"/>
<text transform="translate(1075.57 674.500) rotate(-90)" font-size="5.500" font-weight="bold" text-anchor="end" fill="#111" textLength="61.2" lengthAdjust="spacingAndGlyphs">RLT01_I1_ABL_TAB 01</text>
<path d="M1079.97 716V667.300H1089.92V716" fill="#fff" stroke="#1a1a1a" stroke-width="1.250"/>
<text transform="translate(1086.65 674.500) rotate(-90)" font-size="4.800" text-anchor="end" fill="#6a6a6a" stroke="#6a6a6a" stroke-width=".12" textLength="67.8" lengthAdjust="spacingAndGlyphs">RLT01_I1_ABL_TAB 01_MWT 01</text>
<path d="M1089.92 716V667.300l6.41-3.800 6.41 3.800V716" fill="#dcdcdc" stroke="#1a1a1a" stroke-width="1.250"/>
<text transform="translate(1098.33 674.500) rotate(-90)" font-size="5.500" font-weight="bold" text-anchor="end" fill="#111" textLength="62.0" lengthAdjust="spacingAndGlyphs">RLT01_I1_AUL_TAU 01</text>
<path d="M1102.73 716V667.300H1112.68V716" fill="#fff" stroke="#1a1a1a" stroke-width="1.250"/>
<text transform="translate(1109.41 674.500) rotate(-90)" font-size="4.800" text-anchor="end" fill="#6a6a6a" stroke="#6a6a6a" stroke-width=".12" textLength="68.4" lengthAdjust="spacingAndGlyphs">RLT01_I1_AUL_TAU 01_MWT 01</text>
<path d="M1112.68 716V667.300l6.41-3.800 6.41 3.800V716" fill="#dcdcdc" stroke="#1a1a1a" stroke-width="1.250"/>
<text transform="translate(1121.09 674.500) rotate(-90)" font-size="5.500" font-weight="bold" text-anchor="end" fill="#111" textLength="61.7" lengthAdjust="spacingAndGlyphs">RLT01_I1_FOL_TFO 01</text>
<path d="M1125.49 716V667.300H1135.44V716" fill="#fff" stroke="#1a1a1a" stroke-width="1.250"/>
<text transform="translate(1132.17 674.500) rotate(-90)" font-size="4.800" text-anchor="end" fill="#6a6a6a" stroke="#6a6a6a" stroke-width=".12" textLength="68.2" lengthAdjust="spacingAndGlyphs">RLT01_I1_FOL_TFO 01_MWT 01</text>
<path d="M1135.44 716V667.300l6.41-3.800 6.41 3.800V716" fill="#dcdcdc" stroke="#1a1a1a" stroke-width="1.250"/>
<text transform="translate(1143.85 674.500) rotate(-90)" font-size="5.500" font-weight="bold" text-anchor="end" fill="#111" textLength="61.9" lengthAdjust="spacingAndGlyphs">RLT01_I1_LKU_TNK 01</text>
<path d="M1148.25 716V667.300H1158.20V716" fill="#fff" stroke="#1a1a1a" stroke-width="1.250"/>
<text transform="translate(1154.93 674.500) rotate(-90)" font-size="4.800" text-anchor="end" fill="#6a6a6a" stroke="#6a6a6a" stroke-width=".12" textLength="68.4" lengthAdjust="spacingAndGlyphs">RLT01_I1_LKU_TNK 01_MWT 01</text>
<path d="M1158.20 716V667.300l6.41-3.800 6.41 3.800V716" fill="#dcdcdc" stroke="#1a1a1a" stroke-width="1.250"/>
<rect x="1160.500" y="140" width="2" height="576" fill="#fff"/><path d="M1160.300 140V716" stroke="#8a8a8a" stroke-width=".7"/>
</svg>
<svg class="b" style="left:278px;top:136px;" width="1104" height="602" viewBox="278 136 1104 602">
<path fill-rule="evenodd" fill="#7d7df5" d="M280.400 137.900H1379.400V735.500H280.400zM283.500 140.300V733H1377.500V140.300z"/>
</svg>
</div>
</body></html>
